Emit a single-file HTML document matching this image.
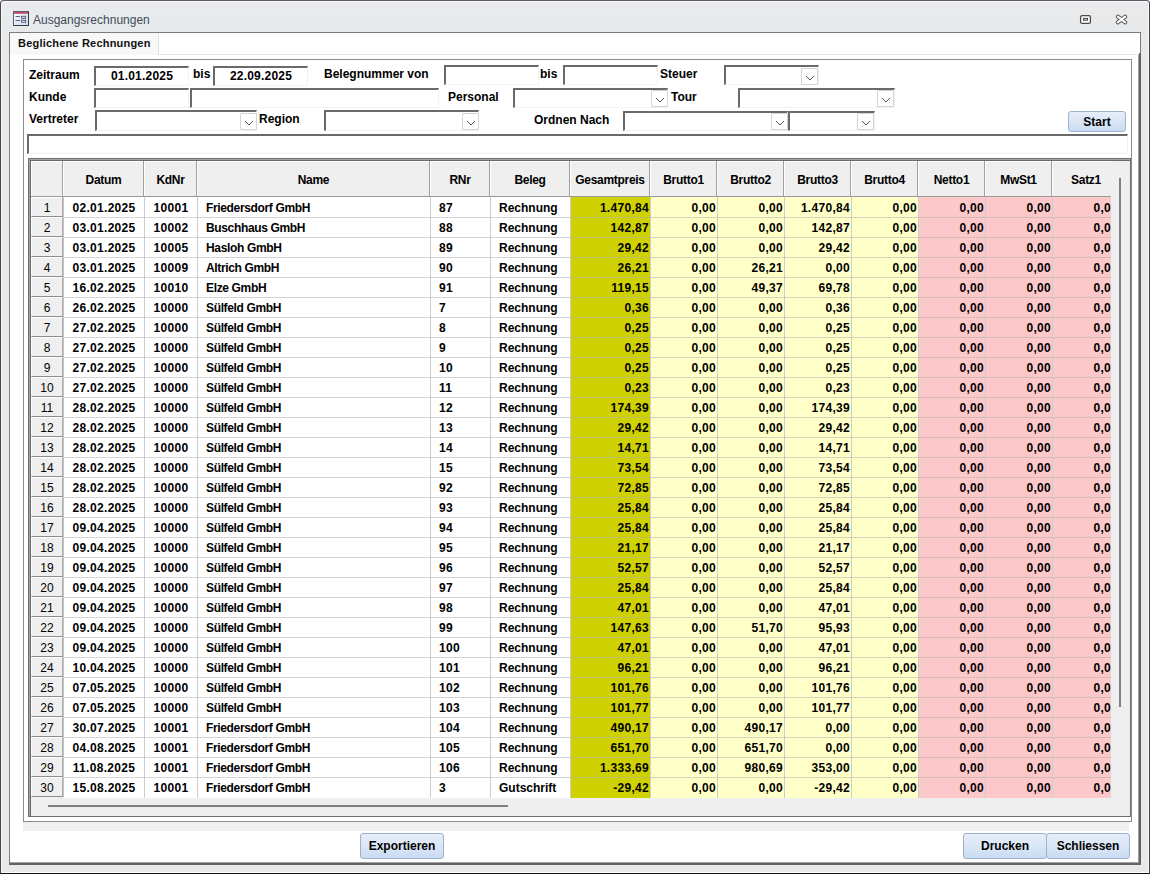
<!DOCTYPE html>
<html><head><meta charset="utf-8"><title>Ausgangsrechnungen</title>
<style>
*{box-sizing:border-box;margin:0;padding:0}
html,body{width:1150px;height:874px;overflow:hidden;background:#e9eaec;font-family:"Liberation Sans",sans-serif;}
.a{position:absolute}
.lbl{position:absolute;font-weight:bold;font-size:12px;color:#000;line-height:14px;white-space:nowrap}
.tb{position:absolute;background:#fff;border-top:2px solid #6a6a6a;border-left:2px solid #6a6a6a;border-right:1px solid #f2f2f2;border-bottom:1px solid #f2f2f2;font-weight:bold;font-size:12px;text-align:center;line-height:16px;color:#000;letter-spacing:0.2px}
.dd{position:absolute;background:#fff;border:1px solid #d4d4d4;border-radius:1px}
.dd svg{position:absolute;left:3px;top:6px}
.btn{position:absolute;border:1px solid #9db2cc;border-radius:3px;background:linear-gradient(#e6eef9,#dce7f6 45%,#c9dcf3);font-weight:bold;font-size:12px;text-align:center;color:#000}
.cell{position:absolute;font-weight:bold;font-size:12px;white-space:nowrap;overflow:hidden;color:#000;letter-spacing:0.3px}
</style></head><body>

<div class="a" style="left:0;top:0;width:1150px;height:874px;border:1px solid;border-color:#5a5c62 #404348 #101214 #404348;border-radius:4px 4px 0 0;box-shadow:inset 0 0 0 1px #fbfbfc;background:linear-gradient(#eaebed,#e8e9eb 30px)"></div>
<svg class="a" style="left:13px;top:11px" width="16" height="15" viewBox="0 0 16 15">
<defs><linearGradient id="ig" x1="0" y1="0" x2="1" y2="1"><stop offset="0" stop-color="#ffffff"/><stop offset="1" stop-color="#c9d4ee"/></linearGradient></defs>
<rect x="0.5" y="0.5" width="15" height="14" fill="url(#ig)" stroke="#56627a"/>
<path d="M15.5 0.5 V14.5 H0.5" fill="none" stroke="#333c4c"/>
<rect x="1" y="1" width="14" height="1.8" fill="#c84868"/>
<rect x="2.5" y="5" width="4.5" height="1" fill="#5a6478"/>
<rect x="2.5" y="9" width="4.5" height="1" fill="#5a6478"/>
<rect x="8.5" y="5.3" width="4" height="2" fill="#eef2fa" stroke="#56627a"/>
<rect x="8.5" y="9.2" width="4" height="2" fill="#eef2fa" stroke="#56627a"/>
</svg>
<div class="a" style="left:33px;top:12px;font-size:12px;color:#3e4a5a;line-height:16px;white-space:nowrap">Ausgangsrechnungen</div>
<svg class="a" style="left:1079px;top:14px" width="13" height="11" viewBox="0 0 13 11">
<rect x="1.6" y="1.6" width="9.8" height="7.8" rx="1.5" fill="#fff" stroke="#4a4a4a" stroke-width="1.3"/>
<rect x="4.6" y="4.4" width="3.8" height="1.8" fill="#fff" stroke="#4a4a4a" stroke-width="1.1"/>
</svg>
<svg class="a" style="left:1115px;top:14px" width="13" height="11" viewBox="0 0 13 11">
<path d="M2.8 2.6 L10.2 8.4 M10.2 2.6 L2.8 8.4" stroke="#505050" stroke-width="3.9" stroke-linecap="round"/>
<path d="M2.8 2.6 L10.2 8.4 M10.2 2.6 L2.8 8.4" stroke="#fff" stroke-width="2.1" stroke-linecap="round"/>
</svg>
<div class="a" style="left:9px;top:32px;width:1132px;height:833px;background:#fff;border-left:1px solid #7c7c7c;border-top:1px solid #7c7c7c;border-right:2px solid #646464;border-bottom:2px solid #646464;box-shadow:inset -1px -1px 0 #a0a0a0"></div>
<div class="a" style="left:10px;top:33px;width:148px;height:22px;background:#f8f8f8"></div>
<div class="a" style="left:1139px;top:33px;width:2px;height:20px;background:#fff;border-right:1px solid #7c7c7c"></div>
<div class="a" style="left:158px;top:33px;width:981px;height:22px;background:#fff;border-left:1px solid #e2e2e2;border-bottom:1px solid #e6e6e6"></div>
<div class="a" style="left:18px;top:37px;font-size:11px;font-weight:bold;color:#111;line-height:13px;white-space:nowrap;letter-spacing:0.2px">Beglichene Rechnungen</div>
<div class="a" style="left:23px;top:59px;width:1109px;height:763px;border:1px solid #8c8c8c;background:#fff"></div>
<div class="a" style="left:23px;top:822px;width:1106px;height:9px;background:#f0f0f0"></div>
<div class="lbl" style="left:29px;top:68px">Zeitraum</div>
<div class="lbl" style="left:193px;top:67px">bis</div>
<div class="lbl" style="left:324px;top:67px">Belegnummer von</div>
<div class="lbl" style="left:540px;top:67px">bis</div>
<div class="lbl" style="left:660px;top:67px">Steuer</div>
<div class="lbl" style="left:29px;top:90px">Kunde</div>
<div class="lbl" style="left:448px;top:90px">Personal</div>
<div class="lbl" style="left:671px;top:90px">Tour</div>
<div class="lbl" style="left:29px;top:112px">Vertreter</div>
<div class="lbl" style="left:259px;top:112px">Region</div>
<div class="lbl" style="left:534px;top:113px">Ordnen Nach</div>
<div class="tb" style="left:94px;top:66px;width:95px;height:20px">01.01.2025</div>
<div class="tb" style="left:213px;top:66px;width:95px;height:20px">22.09.2025</div>
<div class="tb" style="left:444px;top:65px;width:95px;height:20px"></div>
<div class="tb" style="left:563px;top:65px;width:95px;height:20px"></div>
<div class="tb" style="left:724px;top:65px;width:95px;height:20px"></div>
<div class="dd" style="left:801px;top:68px;width:17px;height:17px"><svg width="10" height="6" viewBox="0 0 10 6"><path d="M1 1 L5 5 L9 1" fill="none" stroke="#555" stroke-width="1"/></svg></div>
<div class="tb" style="left:94px;top:88px;width:95px;height:20px"></div>
<div class="tb" style="left:190px;top:88px;width:249px;height:20px"></div>
<div class="tb" style="left:513px;top:88px;width:155px;height:20px"></div>
<div class="dd" style="left:651px;top:90px;width:17px;height:17px"><svg width="10" height="6" viewBox="0 0 10 6"><path d="M1 1 L5 5 L9 1" fill="none" stroke="#555" stroke-width="1"/></svg></div>
<div class="tb" style="left:738px;top:88px;width:157px;height:20px"></div>
<div class="dd" style="left:877px;top:90px;width:17px;height:17px"><svg width="10" height="6" viewBox="0 0 10 6"><path d="M1 1 L5 5 L9 1" fill="none" stroke="#555" stroke-width="1"/></svg></div>
<div class="tb" style="left:95px;top:110px;width:162px;height:21px"></div>
<div class="dd" style="left:240px;top:113px;width:17px;height:17px"><svg width="10" height="6" viewBox="0 0 10 6"><path d="M1 1 L5 5 L9 1" fill="none" stroke="#555" stroke-width="1"/></svg></div>
<div class="tb" style="left:324px;top:110px;width:155px;height:21px"></div>
<div class="dd" style="left:462px;top:113px;width:17px;height:17px"><svg width="10" height="6" viewBox="0 0 10 6"><path d="M1 1 L5 5 L9 1" fill="none" stroke="#555" stroke-width="1"/></svg></div>
<div class="tb" style="left:623px;top:111px;width:165px;height:20px"></div>
<div class="dd" style="left:771px;top:113px;width:17px;height:17px"><svg width="10" height="6" viewBox="0 0 10 6"><path d="M1 1 L5 5 L9 1" fill="none" stroke="#555" stroke-width="1"/></svg></div>
<div class="tb" style="left:788px;top:111px;width:87px;height:20px"></div>
<div class="dd" style="left:857px;top:113px;width:17px;height:17px"><svg width="10" height="6" viewBox="0 0 10 6"><path d="M1 1 L5 5 L9 1" fill="none" stroke="#555" stroke-width="1"/></svg></div>
<div class="btn" style="left:1068px;top:111px;width:58px;height:21px;line-height:21px">Start</div>
<div class="tb" style="left:27px;top:134px;width:1101px;height:20px"></div>
<div class="a" style="left:28px;top:158px;width:1103px;height:659px;background:#efefef;border:1px solid #707070;box-shadow:inset 1px 1px 0 #a4a4a4,inset 2px 2px 0 #6a6a6a"></div>
<div class="a" style="left:31px;top:161px;width:31px;height:35px;background:#efefef;border-top:1px solid #fff;border-left:1px solid #fff"></div>
<div class="a" style="left:63px;top:161px;width:80px;height:35px;background:#efefef;border-top:1px solid #fff;border-left:1px solid #fff;font-weight:bold;font-size:12px;text-align:center;line-height:34px;padding-top:1px;white-space:nowrap;overflow:hidden;letter-spacing:-0.3px">Datum</div>
<div class="a" style="left:144px;top:161px;width:52px;height:35px;background:#efefef;border-top:1px solid #fff;border-left:1px solid #fff;font-weight:bold;font-size:12px;text-align:center;line-height:34px;padding-top:1px;white-space:nowrap;overflow:hidden;letter-spacing:-0.3px">KdNr</div>
<div class="a" style="left:197px;top:161px;width:232px;height:35px;background:#efefef;border-top:1px solid #fff;border-left:1px solid #fff;font-weight:bold;font-size:12px;text-align:center;line-height:34px;padding-top:1px;white-space:nowrap;overflow:hidden;letter-spacing:-0.3px">Name</div>
<div class="a" style="left:430px;top:161px;width:59px;height:35px;background:#efefef;border-top:1px solid #fff;border-left:1px solid #fff;font-weight:bold;font-size:12px;text-align:center;line-height:34px;padding-top:1px;white-space:nowrap;overflow:hidden;letter-spacing:-0.3px">RNr</div>
<div class="a" style="left:490px;top:161px;width:79px;height:35px;background:#efefef;border-top:1px solid #fff;border-left:1px solid #fff;font-weight:bold;font-size:12px;text-align:center;line-height:34px;padding-top:1px;white-space:nowrap;overflow:hidden;letter-spacing:-0.3px">Beleg</div>
<div class="a" style="left:570px;top:161px;width:79px;height:35px;background:#efefef;border-top:1px solid #fff;border-left:1px solid #fff;font-weight:bold;font-size:12px;text-align:center;line-height:34px;padding-top:1px;white-space:nowrap;overflow:hidden;letter-spacing:-0.3px">Gesamtpreis</div>
<div class="a" style="left:650px;top:161px;width:66px;height:35px;background:#efefef;border-top:1px solid #fff;border-left:1px solid #fff;font-weight:bold;font-size:12px;text-align:center;line-height:34px;padding-top:1px;white-space:nowrap;overflow:hidden;letter-spacing:-0.3px">Brutto1</div>
<div class="a" style="left:717px;top:161px;width:66px;height:35px;background:#efefef;border-top:1px solid #fff;border-left:1px solid #fff;font-weight:bold;font-size:12px;text-align:center;line-height:34px;padding-top:1px;white-space:nowrap;overflow:hidden;letter-spacing:-0.3px">Brutto2</div>
<div class="a" style="left:784px;top:161px;width:66px;height:35px;background:#efefef;border-top:1px solid #fff;border-left:1px solid #fff;font-weight:bold;font-size:12px;text-align:center;line-height:34px;padding-top:1px;white-space:nowrap;overflow:hidden;letter-spacing:-0.3px">Brutto3</div>
<div class="a" style="left:851px;top:161px;width:66px;height:35px;background:#efefef;border-top:1px solid #fff;border-left:1px solid #fff;font-weight:bold;font-size:12px;text-align:center;line-height:34px;padding-top:1px;white-space:nowrap;overflow:hidden;letter-spacing:-0.3px">Brutto4</div>
<div class="a" style="left:918px;top:161px;width:66px;height:35px;background:#efefef;border-top:1px solid #fff;border-left:1px solid #fff;font-weight:bold;font-size:12px;text-align:center;line-height:34px;padding-top:1px;white-space:nowrap;overflow:hidden;letter-spacing:-0.3px">Netto1</div>
<div class="a" style="left:985px;top:161px;width:66px;height:35px;background:#efefef;border-top:1px solid #fff;border-left:1px solid #fff;font-weight:bold;font-size:12px;text-align:center;line-height:34px;padding-top:1px;white-space:nowrap;overflow:hidden;letter-spacing:-0.3px">MwSt1</div>
<div class="a" style="left:1052px;top:161px;width:67px;height:35px;background:#efefef;border-top:1px solid #fff;border-left:1px solid #fff;font-weight:bold;font-size:12px;text-align:center;line-height:34px;padding-top:1px;white-space:nowrap;overflow:hidden;letter-spacing:-0.3px">Satz1</div>
<div class="a" style="left:62px;top:161px;width:1px;height:36px;background:#a0a0a0"></div>
<div class="a" style="left:143px;top:161px;width:1px;height:36px;background:#a0a0a0"></div>
<div class="a" style="left:196px;top:161px;width:1px;height:36px;background:#a0a0a0"></div>
<div class="a" style="left:429px;top:161px;width:1px;height:36px;background:#a0a0a0"></div>
<div class="a" style="left:489px;top:161px;width:1px;height:36px;background:#a0a0a0"></div>
<div class="a" style="left:569px;top:161px;width:1px;height:36px;background:#a0a0a0"></div>
<div class="a" style="left:649px;top:161px;width:1px;height:36px;background:#a0a0a0"></div>
<div class="a" style="left:716px;top:161px;width:1px;height:36px;background:#a0a0a0"></div>
<div class="a" style="left:783px;top:161px;width:1px;height:36px;background:#a0a0a0"></div>
<div class="a" style="left:850px;top:161px;width:1px;height:36px;background:#a0a0a0"></div>
<div class="a" style="left:917px;top:161px;width:1px;height:36px;background:#a0a0a0"></div>
<div class="a" style="left:984px;top:161px;width:1px;height:36px;background:#a0a0a0"></div>
<div class="a" style="left:1051px;top:161px;width:1px;height:36px;background:#a0a0a0"></div>
<div class="a" style="left:31px;top:196px;width:1080px;height:1px;background:#9a9a9a"></div>
<div class="a" style="left:31px;top:197px;width:32px;height:20px;background:#efefef;border-bottom:1px solid #8c8c8c;border-right:1px solid #a8a8a8;border-top:1px solid #fff;border-left:1px solid #fff;font-size:12px;text-align:center;line-height:18px;padding-top:1px;color:#000">1</div>
<div class="cell" style="left:64px;top:197px;width:80px;height:20px;background:#fff;line-height:19px;padding-top:2px;text-align:center">02.01.2025</div>
<div class="cell" style="left:145px;top:197px;width:52px;height:20px;background:#fff;line-height:19px;padding-top:2px;text-align:center">10001</div>
<div class="cell" style="left:198px;top:197px;width:232px;height:20px;background:#fff;line-height:19px;padding-top:2px;text-align:left;padding-left:8px;letter-spacing:-0.35px">Friedersdorf GmbH</div>
<div class="cell" style="left:431px;top:197px;width:59px;height:20px;background:#fff;line-height:19px;padding-top:2px;text-align:left;padding-left:8px;letter-spacing:0.3px">87</div>
<div class="cell" style="left:491px;top:197px;width:79px;height:20px;background:#fff;line-height:19px;padding-top:2px;text-align:left;padding-left:8px;letter-spacing:0px">Rechnung</div>
<div class="cell" style="left:571px;top:197px;width:79px;height:20px;background:#cfd200;line-height:19px;padding-top:2px;text-align:right;padding-right:1px">1.470,84</div>
<div class="cell" style="left:651px;top:197px;width:66px;height:20px;background:#ffffc8;line-height:19px;padding-top:2px;text-align:right;padding-right:1px">0,00</div>
<div class="cell" style="left:718px;top:197px;width:66px;height:20px;background:#ffffc8;line-height:19px;padding-top:2px;text-align:right;padding-right:1px">0,00</div>
<div class="cell" style="left:785px;top:197px;width:66px;height:20px;background:#ffffc8;line-height:19px;padding-top:2px;text-align:right;padding-right:1px">1.470,84</div>
<div class="cell" style="left:852px;top:197px;width:66px;height:20px;background:#ffffc8;line-height:19px;padding-top:2px;text-align:right;padding-right:1px">0,00</div>
<div class="cell" style="left:919px;top:197px;width:66px;height:20px;background:#fdc8c9;line-height:19px;padding-top:2px;text-align:right;padding-right:1px">0,00</div>
<div class="cell" style="left:986px;top:197px;width:66px;height:20px;background:#fdc8c9;line-height:19px;padding-top:2px;text-align:right;padding-right:1px">0,00</div>
<div class="cell" style="left:1053px;top:197px;width:66px;height:20px;background:#fdc8c9;line-height:19px;padding-top:2px;text-align:right;padding-right:1px">0,00</div>
<div class="a" style="left:31px;top:217px;width:32px;height:20px;background:#efefef;border-bottom:1px solid #8c8c8c;border-right:1px solid #a8a8a8;border-top:1px solid #fff;border-left:1px solid #fff;font-size:12px;text-align:center;line-height:18px;padding-top:1px;color:#000">2</div>
<div class="cell" style="left:64px;top:217px;width:80px;height:20px;background:#fff;line-height:19px;padding-top:2px;text-align:center">03.01.2025</div>
<div class="cell" style="left:145px;top:217px;width:52px;height:20px;background:#fff;line-height:19px;padding-top:2px;text-align:center">10002</div>
<div class="cell" style="left:198px;top:217px;width:232px;height:20px;background:#fff;line-height:19px;padding-top:2px;text-align:left;padding-left:8px;letter-spacing:-0.35px">Buschhaus GmbH</div>
<div class="cell" style="left:431px;top:217px;width:59px;height:20px;background:#fff;line-height:19px;padding-top:2px;text-align:left;padding-left:8px;letter-spacing:0.3px">88</div>
<div class="cell" style="left:491px;top:217px;width:79px;height:20px;background:#fff;line-height:19px;padding-top:2px;text-align:left;padding-left:8px;letter-spacing:0px">Rechnung</div>
<div class="cell" style="left:571px;top:217px;width:79px;height:20px;background:#cfd200;line-height:19px;padding-top:2px;text-align:right;padding-right:1px">142,87</div>
<div class="cell" style="left:651px;top:217px;width:66px;height:20px;background:#ffffc8;line-height:19px;padding-top:2px;text-align:right;padding-right:1px">0,00</div>
<div class="cell" style="left:718px;top:217px;width:66px;height:20px;background:#ffffc8;line-height:19px;padding-top:2px;text-align:right;padding-right:1px">0,00</div>
<div class="cell" style="left:785px;top:217px;width:66px;height:20px;background:#ffffc8;line-height:19px;padding-top:2px;text-align:right;padding-right:1px">142,87</div>
<div class="cell" style="left:852px;top:217px;width:66px;height:20px;background:#ffffc8;line-height:19px;padding-top:2px;text-align:right;padding-right:1px">0,00</div>
<div class="cell" style="left:919px;top:217px;width:66px;height:20px;background:#fdc8c9;line-height:19px;padding-top:2px;text-align:right;padding-right:1px">0,00</div>
<div class="cell" style="left:986px;top:217px;width:66px;height:20px;background:#fdc8c9;line-height:19px;padding-top:2px;text-align:right;padding-right:1px">0,00</div>
<div class="cell" style="left:1053px;top:217px;width:66px;height:20px;background:#fdc8c9;line-height:19px;padding-top:2px;text-align:right;padding-right:1px">0,00</div>
<div class="a" style="left:31px;top:237px;width:32px;height:20px;background:#efefef;border-bottom:1px solid #8c8c8c;border-right:1px solid #a8a8a8;border-top:1px solid #fff;border-left:1px solid #fff;font-size:12px;text-align:center;line-height:18px;padding-top:1px;color:#000">3</div>
<div class="cell" style="left:64px;top:237px;width:80px;height:20px;background:#fff;line-height:19px;padding-top:2px;text-align:center">03.01.2025</div>
<div class="cell" style="left:145px;top:237px;width:52px;height:20px;background:#fff;line-height:19px;padding-top:2px;text-align:center">10005</div>
<div class="cell" style="left:198px;top:237px;width:232px;height:20px;background:#fff;line-height:19px;padding-top:2px;text-align:left;padding-left:8px;letter-spacing:-0.35px">Hasloh GmbH</div>
<div class="cell" style="left:431px;top:237px;width:59px;height:20px;background:#fff;line-height:19px;padding-top:2px;text-align:left;padding-left:8px;letter-spacing:0.3px">89</div>
<div class="cell" style="left:491px;top:237px;width:79px;height:20px;background:#fff;line-height:19px;padding-top:2px;text-align:left;padding-left:8px;letter-spacing:0px">Rechnung</div>
<div class="cell" style="left:571px;top:237px;width:79px;height:20px;background:#cfd200;line-height:19px;padding-top:2px;text-align:right;padding-right:1px">29,42</div>
<div class="cell" style="left:651px;top:237px;width:66px;height:20px;background:#ffffc8;line-height:19px;padding-top:2px;text-align:right;padding-right:1px">0,00</div>
<div class="cell" style="left:718px;top:237px;width:66px;height:20px;background:#ffffc8;line-height:19px;padding-top:2px;text-align:right;padding-right:1px">0,00</div>
<div class="cell" style="left:785px;top:237px;width:66px;height:20px;background:#ffffc8;line-height:19px;padding-top:2px;text-align:right;padding-right:1px">29,42</div>
<div class="cell" style="left:852px;top:237px;width:66px;height:20px;background:#ffffc8;line-height:19px;padding-top:2px;text-align:right;padding-right:1px">0,00</div>
<div class="cell" style="left:919px;top:237px;width:66px;height:20px;background:#fdc8c9;line-height:19px;padding-top:2px;text-align:right;padding-right:1px">0,00</div>
<div class="cell" style="left:986px;top:237px;width:66px;height:20px;background:#fdc8c9;line-height:19px;padding-top:2px;text-align:right;padding-right:1px">0,00</div>
<div class="cell" style="left:1053px;top:237px;width:66px;height:20px;background:#fdc8c9;line-height:19px;padding-top:2px;text-align:right;padding-right:1px">0,00</div>
<div class="a" style="left:31px;top:257px;width:32px;height:20px;background:#efefef;border-bottom:1px solid #8c8c8c;border-right:1px solid #a8a8a8;border-top:1px solid #fff;border-left:1px solid #fff;font-size:12px;text-align:center;line-height:18px;padding-top:1px;color:#000">4</div>
<div class="cell" style="left:64px;top:257px;width:80px;height:20px;background:#fff;line-height:19px;padding-top:2px;text-align:center">03.01.2025</div>
<div class="cell" style="left:145px;top:257px;width:52px;height:20px;background:#fff;line-height:19px;padding-top:2px;text-align:center">10009</div>
<div class="cell" style="left:198px;top:257px;width:232px;height:20px;background:#fff;line-height:19px;padding-top:2px;text-align:left;padding-left:8px;letter-spacing:-0.35px">Altrich GmbH</div>
<div class="cell" style="left:431px;top:257px;width:59px;height:20px;background:#fff;line-height:19px;padding-top:2px;text-align:left;padding-left:8px;letter-spacing:0.3px">90</div>
<div class="cell" style="left:491px;top:257px;width:79px;height:20px;background:#fff;line-height:19px;padding-top:2px;text-align:left;padding-left:8px;letter-spacing:0px">Rechnung</div>
<div class="cell" style="left:571px;top:257px;width:79px;height:20px;background:#cfd200;line-height:19px;padding-top:2px;text-align:right;padding-right:1px">26,21</div>
<div class="cell" style="left:651px;top:257px;width:66px;height:20px;background:#ffffc8;line-height:19px;padding-top:2px;text-align:right;padding-right:1px">0,00</div>
<div class="cell" style="left:718px;top:257px;width:66px;height:20px;background:#ffffc8;line-height:19px;padding-top:2px;text-align:right;padding-right:1px">26,21</div>
<div class="cell" style="left:785px;top:257px;width:66px;height:20px;background:#ffffc8;line-height:19px;padding-top:2px;text-align:right;padding-right:1px">0,00</div>
<div class="cell" style="left:852px;top:257px;width:66px;height:20px;background:#ffffc8;line-height:19px;padding-top:2px;text-align:right;padding-right:1px">0,00</div>
<div class="cell" style="left:919px;top:257px;width:66px;height:20px;background:#fdc8c9;line-height:19px;padding-top:2px;text-align:right;padding-right:1px">0,00</div>
<div class="cell" style="left:986px;top:257px;width:66px;height:20px;background:#fdc8c9;line-height:19px;padding-top:2px;text-align:right;padding-right:1px">0,00</div>
<div class="cell" style="left:1053px;top:257px;width:66px;height:20px;background:#fdc8c9;line-height:19px;padding-top:2px;text-align:right;padding-right:1px">0,00</div>
<div class="a" style="left:31px;top:277px;width:32px;height:20px;background:#efefef;border-bottom:1px solid #8c8c8c;border-right:1px solid #a8a8a8;border-top:1px solid #fff;border-left:1px solid #fff;font-size:12px;text-align:center;line-height:18px;padding-top:1px;color:#000">5</div>
<div class="cell" style="left:64px;top:277px;width:80px;height:20px;background:#fff;line-height:19px;padding-top:2px;text-align:center">16.02.2025</div>
<div class="cell" style="left:145px;top:277px;width:52px;height:20px;background:#fff;line-height:19px;padding-top:2px;text-align:center">10010</div>
<div class="cell" style="left:198px;top:277px;width:232px;height:20px;background:#fff;line-height:19px;padding-top:2px;text-align:left;padding-left:8px;letter-spacing:-0.35px">Elze GmbH</div>
<div class="cell" style="left:431px;top:277px;width:59px;height:20px;background:#fff;line-height:19px;padding-top:2px;text-align:left;padding-left:8px;letter-spacing:0.3px">91</div>
<div class="cell" style="left:491px;top:277px;width:79px;height:20px;background:#fff;line-height:19px;padding-top:2px;text-align:left;padding-left:8px;letter-spacing:0px">Rechnung</div>
<div class="cell" style="left:571px;top:277px;width:79px;height:20px;background:#cfd200;line-height:19px;padding-top:2px;text-align:right;padding-right:1px">119,15</div>
<div class="cell" style="left:651px;top:277px;width:66px;height:20px;background:#ffffc8;line-height:19px;padding-top:2px;text-align:right;padding-right:1px">0,00</div>
<div class="cell" style="left:718px;top:277px;width:66px;height:20px;background:#ffffc8;line-height:19px;padding-top:2px;text-align:right;padding-right:1px">49,37</div>
<div class="cell" style="left:785px;top:277px;width:66px;height:20px;background:#ffffc8;line-height:19px;padding-top:2px;text-align:right;padding-right:1px">69,78</div>
<div class="cell" style="left:852px;top:277px;width:66px;height:20px;background:#ffffc8;line-height:19px;padding-top:2px;text-align:right;padding-right:1px">0,00</div>
<div class="cell" style="left:919px;top:277px;width:66px;height:20px;background:#fdc8c9;line-height:19px;padding-top:2px;text-align:right;padding-right:1px">0,00</div>
<div class="cell" style="left:986px;top:277px;width:66px;height:20px;background:#fdc8c9;line-height:19px;padding-top:2px;text-align:right;padding-right:1px">0,00</div>
<div class="cell" style="left:1053px;top:277px;width:66px;height:20px;background:#fdc8c9;line-height:19px;padding-top:2px;text-align:right;padding-right:1px">0,00</div>
<div class="a" style="left:31px;top:297px;width:32px;height:20px;background:#efefef;border-bottom:1px solid #8c8c8c;border-right:1px solid #a8a8a8;border-top:1px solid #fff;border-left:1px solid #fff;font-size:12px;text-align:center;line-height:18px;padding-top:1px;color:#000">6</div>
<div class="cell" style="left:64px;top:297px;width:80px;height:20px;background:#fff;line-height:19px;padding-top:2px;text-align:center">26.02.2025</div>
<div class="cell" style="left:145px;top:297px;width:52px;height:20px;background:#fff;line-height:19px;padding-top:2px;text-align:center">10000</div>
<div class="cell" style="left:198px;top:297px;width:232px;height:20px;background:#fff;line-height:19px;padding-top:2px;text-align:left;padding-left:8px;letter-spacing:-0.35px">Sülfeld GmbH</div>
<div class="cell" style="left:431px;top:297px;width:59px;height:20px;background:#fff;line-height:19px;padding-top:2px;text-align:left;padding-left:8px;letter-spacing:0.3px">7</div>
<div class="cell" style="left:491px;top:297px;width:79px;height:20px;background:#fff;line-height:19px;padding-top:2px;text-align:left;padding-left:8px;letter-spacing:0px">Rechnung</div>
<div class="cell" style="left:571px;top:297px;width:79px;height:20px;background:#cfd200;line-height:19px;padding-top:2px;text-align:right;padding-right:1px">0,36</div>
<div class="cell" style="left:651px;top:297px;width:66px;height:20px;background:#ffffc8;line-height:19px;padding-top:2px;text-align:right;padding-right:1px">0,00</div>
<div class="cell" style="left:718px;top:297px;width:66px;height:20px;background:#ffffc8;line-height:19px;padding-top:2px;text-align:right;padding-right:1px">0,00</div>
<div class="cell" style="left:785px;top:297px;width:66px;height:20px;background:#ffffc8;line-height:19px;padding-top:2px;text-align:right;padding-right:1px">0,36</div>
<div class="cell" style="left:852px;top:297px;width:66px;height:20px;background:#ffffc8;line-height:19px;padding-top:2px;text-align:right;padding-right:1px">0,00</div>
<div class="cell" style="left:919px;top:297px;width:66px;height:20px;background:#fdc8c9;line-height:19px;padding-top:2px;text-align:right;padding-right:1px">0,00</div>
<div class="cell" style="left:986px;top:297px;width:66px;height:20px;background:#fdc8c9;line-height:19px;padding-top:2px;text-align:right;padding-right:1px">0,00</div>
<div class="cell" style="left:1053px;top:297px;width:66px;height:20px;background:#fdc8c9;line-height:19px;padding-top:2px;text-align:right;padding-right:1px">0,00</div>
<div class="a" style="left:31px;top:317px;width:32px;height:20px;background:#efefef;border-bottom:1px solid #8c8c8c;border-right:1px solid #a8a8a8;border-top:1px solid #fff;border-left:1px solid #fff;font-size:12px;text-align:center;line-height:18px;padding-top:1px;color:#000">7</div>
<div class="cell" style="left:64px;top:317px;width:80px;height:20px;background:#fff;line-height:19px;padding-top:2px;text-align:center">27.02.2025</div>
<div class="cell" style="left:145px;top:317px;width:52px;height:20px;background:#fff;line-height:19px;padding-top:2px;text-align:center">10000</div>
<div class="cell" style="left:198px;top:317px;width:232px;height:20px;background:#fff;line-height:19px;padding-top:2px;text-align:left;padding-left:8px;letter-spacing:-0.35px">Sülfeld GmbH</div>
<div class="cell" style="left:431px;top:317px;width:59px;height:20px;background:#fff;line-height:19px;padding-top:2px;text-align:left;padding-left:8px;letter-spacing:0.3px">8</div>
<div class="cell" style="left:491px;top:317px;width:79px;height:20px;background:#fff;line-height:19px;padding-top:2px;text-align:left;padding-left:8px;letter-spacing:0px">Rechnung</div>
<div class="cell" style="left:571px;top:317px;width:79px;height:20px;background:#cfd200;line-height:19px;padding-top:2px;text-align:right;padding-right:1px">0,25</div>
<div class="cell" style="left:651px;top:317px;width:66px;height:20px;background:#ffffc8;line-height:19px;padding-top:2px;text-align:right;padding-right:1px">0,00</div>
<div class="cell" style="left:718px;top:317px;width:66px;height:20px;background:#ffffc8;line-height:19px;padding-top:2px;text-align:right;padding-right:1px">0,00</div>
<div class="cell" style="left:785px;top:317px;width:66px;height:20px;background:#ffffc8;line-height:19px;padding-top:2px;text-align:right;padding-right:1px">0,25</div>
<div class="cell" style="left:852px;top:317px;width:66px;height:20px;background:#ffffc8;line-height:19px;padding-top:2px;text-align:right;padding-right:1px">0,00</div>
<div class="cell" style="left:919px;top:317px;width:66px;height:20px;background:#fdc8c9;line-height:19px;padding-top:2px;text-align:right;padding-right:1px">0,00</div>
<div class="cell" style="left:986px;top:317px;width:66px;height:20px;background:#fdc8c9;line-height:19px;padding-top:2px;text-align:right;padding-right:1px">0,00</div>
<div class="cell" style="left:1053px;top:317px;width:66px;height:20px;background:#fdc8c9;line-height:19px;padding-top:2px;text-align:right;padding-right:1px">0,00</div>
<div class="a" style="left:31px;top:337px;width:32px;height:20px;background:#efefef;border-bottom:1px solid #8c8c8c;border-right:1px solid #a8a8a8;border-top:1px solid #fff;border-left:1px solid #fff;font-size:12px;text-align:center;line-height:18px;padding-top:1px;color:#000">8</div>
<div class="cell" style="left:64px;top:337px;width:80px;height:20px;background:#fff;line-height:19px;padding-top:2px;text-align:center">27.02.2025</div>
<div class="cell" style="left:145px;top:337px;width:52px;height:20px;background:#fff;line-height:19px;padding-top:2px;text-align:center">10000</div>
<div class="cell" style="left:198px;top:337px;width:232px;height:20px;background:#fff;line-height:19px;padding-top:2px;text-align:left;padding-left:8px;letter-spacing:-0.35px">Sülfeld GmbH</div>
<div class="cell" style="left:431px;top:337px;width:59px;height:20px;background:#fff;line-height:19px;padding-top:2px;text-align:left;padding-left:8px;letter-spacing:0.3px">9</div>
<div class="cell" style="left:491px;top:337px;width:79px;height:20px;background:#fff;line-height:19px;padding-top:2px;text-align:left;padding-left:8px;letter-spacing:0px">Rechnung</div>
<div class="cell" style="left:571px;top:337px;width:79px;height:20px;background:#cfd200;line-height:19px;padding-top:2px;text-align:right;padding-right:1px">0,25</div>
<div class="cell" style="left:651px;top:337px;width:66px;height:20px;background:#ffffc8;line-height:19px;padding-top:2px;text-align:right;padding-right:1px">0,00</div>
<div class="cell" style="left:718px;top:337px;width:66px;height:20px;background:#ffffc8;line-height:19px;padding-top:2px;text-align:right;padding-right:1px">0,00</div>
<div class="cell" style="left:785px;top:337px;width:66px;height:20px;background:#ffffc8;line-height:19px;padding-top:2px;text-align:right;padding-right:1px">0,25</div>
<div class="cell" style="left:852px;top:337px;width:66px;height:20px;background:#ffffc8;line-height:19px;padding-top:2px;text-align:right;padding-right:1px">0,00</div>
<div class="cell" style="left:919px;top:337px;width:66px;height:20px;background:#fdc8c9;line-height:19px;padding-top:2px;text-align:right;padding-right:1px">0,00</div>
<div class="cell" style="left:986px;top:337px;width:66px;height:20px;background:#fdc8c9;line-height:19px;padding-top:2px;text-align:right;padding-right:1px">0,00</div>
<div class="cell" style="left:1053px;top:337px;width:66px;height:20px;background:#fdc8c9;line-height:19px;padding-top:2px;text-align:right;padding-right:1px">0,00</div>
<div class="a" style="left:31px;top:357px;width:32px;height:20px;background:#efefef;border-bottom:1px solid #8c8c8c;border-right:1px solid #a8a8a8;border-top:1px solid #fff;border-left:1px solid #fff;font-size:12px;text-align:center;line-height:18px;padding-top:1px;color:#000">9</div>
<div class="cell" style="left:64px;top:357px;width:80px;height:20px;background:#fff;line-height:19px;padding-top:2px;text-align:center">27.02.2025</div>
<div class="cell" style="left:145px;top:357px;width:52px;height:20px;background:#fff;line-height:19px;padding-top:2px;text-align:center">10000</div>
<div class="cell" style="left:198px;top:357px;width:232px;height:20px;background:#fff;line-height:19px;padding-top:2px;text-align:left;padding-left:8px;letter-spacing:-0.35px">Sülfeld GmbH</div>
<div class="cell" style="left:431px;top:357px;width:59px;height:20px;background:#fff;line-height:19px;padding-top:2px;text-align:left;padding-left:8px;letter-spacing:0.3px">10</div>
<div class="cell" style="left:491px;top:357px;width:79px;height:20px;background:#fff;line-height:19px;padding-top:2px;text-align:left;padding-left:8px;letter-spacing:0px">Rechnung</div>
<div class="cell" style="left:571px;top:357px;width:79px;height:20px;background:#cfd200;line-height:19px;padding-top:2px;text-align:right;padding-right:1px">0,25</div>
<div class="cell" style="left:651px;top:357px;width:66px;height:20px;background:#ffffc8;line-height:19px;padding-top:2px;text-align:right;padding-right:1px">0,00</div>
<div class="cell" style="left:718px;top:357px;width:66px;height:20px;background:#ffffc8;line-height:19px;padding-top:2px;text-align:right;padding-right:1px">0,00</div>
<div class="cell" style="left:785px;top:357px;width:66px;height:20px;background:#ffffc8;line-height:19px;padding-top:2px;text-align:right;padding-right:1px">0,25</div>
<div class="cell" style="left:852px;top:357px;width:66px;height:20px;background:#ffffc8;line-height:19px;padding-top:2px;text-align:right;padding-right:1px">0,00</div>
<div class="cell" style="left:919px;top:357px;width:66px;height:20px;background:#fdc8c9;line-height:19px;padding-top:2px;text-align:right;padding-right:1px">0,00</div>
<div class="cell" style="left:986px;top:357px;width:66px;height:20px;background:#fdc8c9;line-height:19px;padding-top:2px;text-align:right;padding-right:1px">0,00</div>
<div class="cell" style="left:1053px;top:357px;width:66px;height:20px;background:#fdc8c9;line-height:19px;padding-top:2px;text-align:right;padding-right:1px">0,00</div>
<div class="a" style="left:31px;top:377px;width:32px;height:20px;background:#efefef;border-bottom:1px solid #8c8c8c;border-right:1px solid #a8a8a8;border-top:1px solid #fff;border-left:1px solid #fff;font-size:12px;text-align:center;line-height:18px;padding-top:1px;color:#000">10</div>
<div class="cell" style="left:64px;top:377px;width:80px;height:20px;background:#fff;line-height:19px;padding-top:2px;text-align:center">27.02.2025</div>
<div class="cell" style="left:145px;top:377px;width:52px;height:20px;background:#fff;line-height:19px;padding-top:2px;text-align:center">10000</div>
<div class="cell" style="left:198px;top:377px;width:232px;height:20px;background:#fff;line-height:19px;padding-top:2px;text-align:left;padding-left:8px;letter-spacing:-0.35px">Sülfeld GmbH</div>
<div class="cell" style="left:431px;top:377px;width:59px;height:20px;background:#fff;line-height:19px;padding-top:2px;text-align:left;padding-left:8px;letter-spacing:0.3px">11</div>
<div class="cell" style="left:491px;top:377px;width:79px;height:20px;background:#fff;line-height:19px;padding-top:2px;text-align:left;padding-left:8px;letter-spacing:0px">Rechnung</div>
<div class="cell" style="left:571px;top:377px;width:79px;height:20px;background:#cfd200;line-height:19px;padding-top:2px;text-align:right;padding-right:1px">0,23</div>
<div class="cell" style="left:651px;top:377px;width:66px;height:20px;background:#ffffc8;line-height:19px;padding-top:2px;text-align:right;padding-right:1px">0,00</div>
<div class="cell" style="left:718px;top:377px;width:66px;height:20px;background:#ffffc8;line-height:19px;padding-top:2px;text-align:right;padding-right:1px">0,00</div>
<div class="cell" style="left:785px;top:377px;width:66px;height:20px;background:#ffffc8;line-height:19px;padding-top:2px;text-align:right;padding-right:1px">0,23</div>
<div class="cell" style="left:852px;top:377px;width:66px;height:20px;background:#ffffc8;line-height:19px;padding-top:2px;text-align:right;padding-right:1px">0,00</div>
<div class="cell" style="left:919px;top:377px;width:66px;height:20px;background:#fdc8c9;line-height:19px;padding-top:2px;text-align:right;padding-right:1px">0,00</div>
<div class="cell" style="left:986px;top:377px;width:66px;height:20px;background:#fdc8c9;line-height:19px;padding-top:2px;text-align:right;padding-right:1px">0,00</div>
<div class="cell" style="left:1053px;top:377px;width:66px;height:20px;background:#fdc8c9;line-height:19px;padding-top:2px;text-align:right;padding-right:1px">0,00</div>
<div class="a" style="left:31px;top:397px;width:32px;height:20px;background:#efefef;border-bottom:1px solid #8c8c8c;border-right:1px solid #a8a8a8;border-top:1px solid #fff;border-left:1px solid #fff;font-size:12px;text-align:center;line-height:18px;padding-top:1px;color:#000">11</div>
<div class="cell" style="left:64px;top:397px;width:80px;height:20px;background:#fff;line-height:19px;padding-top:2px;text-align:center">28.02.2025</div>
<div class="cell" style="left:145px;top:397px;width:52px;height:20px;background:#fff;line-height:19px;padding-top:2px;text-align:center">10000</div>
<div class="cell" style="left:198px;top:397px;width:232px;height:20px;background:#fff;line-height:19px;padding-top:2px;text-align:left;padding-left:8px;letter-spacing:-0.35px">Sülfeld GmbH</div>
<div class="cell" style="left:431px;top:397px;width:59px;height:20px;background:#fff;line-height:19px;padding-top:2px;text-align:left;padding-left:8px;letter-spacing:0.3px">12</div>
<div class="cell" style="left:491px;top:397px;width:79px;height:20px;background:#fff;line-height:19px;padding-top:2px;text-align:left;padding-left:8px;letter-spacing:0px">Rechnung</div>
<div class="cell" style="left:571px;top:397px;width:79px;height:20px;background:#cfd200;line-height:19px;padding-top:2px;text-align:right;padding-right:1px">174,39</div>
<div class="cell" style="left:651px;top:397px;width:66px;height:20px;background:#ffffc8;line-height:19px;padding-top:2px;text-align:right;padding-right:1px">0,00</div>
<div class="cell" style="left:718px;top:397px;width:66px;height:20px;background:#ffffc8;line-height:19px;padding-top:2px;text-align:right;padding-right:1px">0,00</div>
<div class="cell" style="left:785px;top:397px;width:66px;height:20px;background:#ffffc8;line-height:19px;padding-top:2px;text-align:right;padding-right:1px">174,39</div>
<div class="cell" style="left:852px;top:397px;width:66px;height:20px;background:#ffffc8;line-height:19px;padding-top:2px;text-align:right;padding-right:1px">0,00</div>
<div class="cell" style="left:919px;top:397px;width:66px;height:20px;background:#fdc8c9;line-height:19px;padding-top:2px;text-align:right;padding-right:1px">0,00</div>
<div class="cell" style="left:986px;top:397px;width:66px;height:20px;background:#fdc8c9;line-height:19px;padding-top:2px;text-align:right;padding-right:1px">0,00</div>
<div class="cell" style="left:1053px;top:397px;width:66px;height:20px;background:#fdc8c9;line-height:19px;padding-top:2px;text-align:right;padding-right:1px">0,00</div>
<div class="a" style="left:31px;top:417px;width:32px;height:20px;background:#efefef;border-bottom:1px solid #8c8c8c;border-right:1px solid #a8a8a8;border-top:1px solid #fff;border-left:1px solid #fff;font-size:12px;text-align:center;line-height:18px;padding-top:1px;color:#000">12</div>
<div class="cell" style="left:64px;top:417px;width:80px;height:20px;background:#fff;line-height:19px;padding-top:2px;text-align:center">28.02.2025</div>
<div class="cell" style="left:145px;top:417px;width:52px;height:20px;background:#fff;line-height:19px;padding-top:2px;text-align:center">10000</div>
<div class="cell" style="left:198px;top:417px;width:232px;height:20px;background:#fff;line-height:19px;padding-top:2px;text-align:left;padding-left:8px;letter-spacing:-0.35px">Sülfeld GmbH</div>
<div class="cell" style="left:431px;top:417px;width:59px;height:20px;background:#fff;line-height:19px;padding-top:2px;text-align:left;padding-left:8px;letter-spacing:0.3px">13</div>
<div class="cell" style="left:491px;top:417px;width:79px;height:20px;background:#fff;line-height:19px;padding-top:2px;text-align:left;padding-left:8px;letter-spacing:0px">Rechnung</div>
<div class="cell" style="left:571px;top:417px;width:79px;height:20px;background:#cfd200;line-height:19px;padding-top:2px;text-align:right;padding-right:1px">29,42</div>
<div class="cell" style="left:651px;top:417px;width:66px;height:20px;background:#ffffc8;line-height:19px;padding-top:2px;text-align:right;padding-right:1px">0,00</div>
<div class="cell" style="left:718px;top:417px;width:66px;height:20px;background:#ffffc8;line-height:19px;padding-top:2px;text-align:right;padding-right:1px">0,00</div>
<div class="cell" style="left:785px;top:417px;width:66px;height:20px;background:#ffffc8;line-height:19px;padding-top:2px;text-align:right;padding-right:1px">29,42</div>
<div class="cell" style="left:852px;top:417px;width:66px;height:20px;background:#ffffc8;line-height:19px;padding-top:2px;text-align:right;padding-right:1px">0,00</div>
<div class="cell" style="left:919px;top:417px;width:66px;height:20px;background:#fdc8c9;line-height:19px;padding-top:2px;text-align:right;padding-right:1px">0,00</div>
<div class="cell" style="left:986px;top:417px;width:66px;height:20px;background:#fdc8c9;line-height:19px;padding-top:2px;text-align:right;padding-right:1px">0,00</div>
<div class="cell" style="left:1053px;top:417px;width:66px;height:20px;background:#fdc8c9;line-height:19px;padding-top:2px;text-align:right;padding-right:1px">0,00</div>
<div class="a" style="left:31px;top:437px;width:32px;height:20px;background:#efefef;border-bottom:1px solid #8c8c8c;border-right:1px solid #a8a8a8;border-top:1px solid #fff;border-left:1px solid #fff;font-size:12px;text-align:center;line-height:18px;padding-top:1px;color:#000">13</div>
<div class="cell" style="left:64px;top:437px;width:80px;height:20px;background:#fff;line-height:19px;padding-top:2px;text-align:center">28.02.2025</div>
<div class="cell" style="left:145px;top:437px;width:52px;height:20px;background:#fff;line-height:19px;padding-top:2px;text-align:center">10000</div>
<div class="cell" style="left:198px;top:437px;width:232px;height:20px;background:#fff;line-height:19px;padding-top:2px;text-align:left;padding-left:8px;letter-spacing:-0.35px">Sülfeld GmbH</div>
<div class="cell" style="left:431px;top:437px;width:59px;height:20px;background:#fff;line-height:19px;padding-top:2px;text-align:left;padding-left:8px;letter-spacing:0.3px">14</div>
<div class="cell" style="left:491px;top:437px;width:79px;height:20px;background:#fff;line-height:19px;padding-top:2px;text-align:left;padding-left:8px;letter-spacing:0px">Rechnung</div>
<div class="cell" style="left:571px;top:437px;width:79px;height:20px;background:#cfd200;line-height:19px;padding-top:2px;text-align:right;padding-right:1px">14,71</div>
<div class="cell" style="left:651px;top:437px;width:66px;height:20px;background:#ffffc8;line-height:19px;padding-top:2px;text-align:right;padding-right:1px">0,00</div>
<div class="cell" style="left:718px;top:437px;width:66px;height:20px;background:#ffffc8;line-height:19px;padding-top:2px;text-align:right;padding-right:1px">0,00</div>
<div class="cell" style="left:785px;top:437px;width:66px;height:20px;background:#ffffc8;line-height:19px;padding-top:2px;text-align:right;padding-right:1px">14,71</div>
<div class="cell" style="left:852px;top:437px;width:66px;height:20px;background:#ffffc8;line-height:19px;padding-top:2px;text-align:right;padding-right:1px">0,00</div>
<div class="cell" style="left:919px;top:437px;width:66px;height:20px;background:#fdc8c9;line-height:19px;padding-top:2px;text-align:right;padding-right:1px">0,00</div>
<div class="cell" style="left:986px;top:437px;width:66px;height:20px;background:#fdc8c9;line-height:19px;padding-top:2px;text-align:right;padding-right:1px">0,00</div>
<div class="cell" style="left:1053px;top:437px;width:66px;height:20px;background:#fdc8c9;line-height:19px;padding-top:2px;text-align:right;padding-right:1px">0,00</div>
<div class="a" style="left:31px;top:457px;width:32px;height:20px;background:#efefef;border-bottom:1px solid #8c8c8c;border-right:1px solid #a8a8a8;border-top:1px solid #fff;border-left:1px solid #fff;font-size:12px;text-align:center;line-height:18px;padding-top:1px;color:#000">14</div>
<div class="cell" style="left:64px;top:457px;width:80px;height:20px;background:#fff;line-height:19px;padding-top:2px;text-align:center">28.02.2025</div>
<div class="cell" style="left:145px;top:457px;width:52px;height:20px;background:#fff;line-height:19px;padding-top:2px;text-align:center">10000</div>
<div class="cell" style="left:198px;top:457px;width:232px;height:20px;background:#fff;line-height:19px;padding-top:2px;text-align:left;padding-left:8px;letter-spacing:-0.35px">Sülfeld GmbH</div>
<div class="cell" style="left:431px;top:457px;width:59px;height:20px;background:#fff;line-height:19px;padding-top:2px;text-align:left;padding-left:8px;letter-spacing:0.3px">15</div>
<div class="cell" style="left:491px;top:457px;width:79px;height:20px;background:#fff;line-height:19px;padding-top:2px;text-align:left;padding-left:8px;letter-spacing:0px">Rechnung</div>
<div class="cell" style="left:571px;top:457px;width:79px;height:20px;background:#cfd200;line-height:19px;padding-top:2px;text-align:right;padding-right:1px">73,54</div>
<div class="cell" style="left:651px;top:457px;width:66px;height:20px;background:#ffffc8;line-height:19px;padding-top:2px;text-align:right;padding-right:1px">0,00</div>
<div class="cell" style="left:718px;top:457px;width:66px;height:20px;background:#ffffc8;line-height:19px;padding-top:2px;text-align:right;padding-right:1px">0,00</div>
<div class="cell" style="left:785px;top:457px;width:66px;height:20px;background:#ffffc8;line-height:19px;padding-top:2px;text-align:right;padding-right:1px">73,54</div>
<div class="cell" style="left:852px;top:457px;width:66px;height:20px;background:#ffffc8;line-height:19px;padding-top:2px;text-align:right;padding-right:1px">0,00</div>
<div class="cell" style="left:919px;top:457px;width:66px;height:20px;background:#fdc8c9;line-height:19px;padding-top:2px;text-align:right;padding-right:1px">0,00</div>
<div class="cell" style="left:986px;top:457px;width:66px;height:20px;background:#fdc8c9;line-height:19px;padding-top:2px;text-align:right;padding-right:1px">0,00</div>
<div class="cell" style="left:1053px;top:457px;width:66px;height:20px;background:#fdc8c9;line-height:19px;padding-top:2px;text-align:right;padding-right:1px">0,00</div>
<div class="a" style="left:31px;top:477px;width:32px;height:20px;background:#efefef;border-bottom:1px solid #8c8c8c;border-right:1px solid #a8a8a8;border-top:1px solid #fff;border-left:1px solid #fff;font-size:12px;text-align:center;line-height:18px;padding-top:1px;color:#000">15</div>
<div class="cell" style="left:64px;top:477px;width:80px;height:20px;background:#fff;line-height:19px;padding-top:2px;text-align:center">28.02.2025</div>
<div class="cell" style="left:145px;top:477px;width:52px;height:20px;background:#fff;line-height:19px;padding-top:2px;text-align:center">10000</div>
<div class="cell" style="left:198px;top:477px;width:232px;height:20px;background:#fff;line-height:19px;padding-top:2px;text-align:left;padding-left:8px;letter-spacing:-0.35px">Sülfeld GmbH</div>
<div class="cell" style="left:431px;top:477px;width:59px;height:20px;background:#fff;line-height:19px;padding-top:2px;text-align:left;padding-left:8px;letter-spacing:0.3px">92</div>
<div class="cell" style="left:491px;top:477px;width:79px;height:20px;background:#fff;line-height:19px;padding-top:2px;text-align:left;padding-left:8px;letter-spacing:0px">Rechnung</div>
<div class="cell" style="left:571px;top:477px;width:79px;height:20px;background:#cfd200;line-height:19px;padding-top:2px;text-align:right;padding-right:1px">72,85</div>
<div class="cell" style="left:651px;top:477px;width:66px;height:20px;background:#ffffc8;line-height:19px;padding-top:2px;text-align:right;padding-right:1px">0,00</div>
<div class="cell" style="left:718px;top:477px;width:66px;height:20px;background:#ffffc8;line-height:19px;padding-top:2px;text-align:right;padding-right:1px">0,00</div>
<div class="cell" style="left:785px;top:477px;width:66px;height:20px;background:#ffffc8;line-height:19px;padding-top:2px;text-align:right;padding-right:1px">72,85</div>
<div class="cell" style="left:852px;top:477px;width:66px;height:20px;background:#ffffc8;line-height:19px;padding-top:2px;text-align:right;padding-right:1px">0,00</div>
<div class="cell" style="left:919px;top:477px;width:66px;height:20px;background:#fdc8c9;line-height:19px;padding-top:2px;text-align:right;padding-right:1px">0,00</div>
<div class="cell" style="left:986px;top:477px;width:66px;height:20px;background:#fdc8c9;line-height:19px;padding-top:2px;text-align:right;padding-right:1px">0,00</div>
<div class="cell" style="left:1053px;top:477px;width:66px;height:20px;background:#fdc8c9;line-height:19px;padding-top:2px;text-align:right;padding-right:1px">0,00</div>
<div class="a" style="left:31px;top:497px;width:32px;height:20px;background:#efefef;border-bottom:1px solid #8c8c8c;border-right:1px solid #a8a8a8;border-top:1px solid #fff;border-left:1px solid #fff;font-size:12px;text-align:center;line-height:18px;padding-top:1px;color:#000">16</div>
<div class="cell" style="left:64px;top:497px;width:80px;height:20px;background:#fff;line-height:19px;padding-top:2px;text-align:center">28.02.2025</div>
<div class="cell" style="left:145px;top:497px;width:52px;height:20px;background:#fff;line-height:19px;padding-top:2px;text-align:center">10000</div>
<div class="cell" style="left:198px;top:497px;width:232px;height:20px;background:#fff;line-height:19px;padding-top:2px;text-align:left;padding-left:8px;letter-spacing:-0.35px">Sülfeld GmbH</div>
<div class="cell" style="left:431px;top:497px;width:59px;height:20px;background:#fff;line-height:19px;padding-top:2px;text-align:left;padding-left:8px;letter-spacing:0.3px">93</div>
<div class="cell" style="left:491px;top:497px;width:79px;height:20px;background:#fff;line-height:19px;padding-top:2px;text-align:left;padding-left:8px;letter-spacing:0px">Rechnung</div>
<div class="cell" style="left:571px;top:497px;width:79px;height:20px;background:#cfd200;line-height:19px;padding-top:2px;text-align:right;padding-right:1px">25,84</div>
<div class="cell" style="left:651px;top:497px;width:66px;height:20px;background:#ffffc8;line-height:19px;padding-top:2px;text-align:right;padding-right:1px">0,00</div>
<div class="cell" style="left:718px;top:497px;width:66px;height:20px;background:#ffffc8;line-height:19px;padding-top:2px;text-align:right;padding-right:1px">0,00</div>
<div class="cell" style="left:785px;top:497px;width:66px;height:20px;background:#ffffc8;line-height:19px;padding-top:2px;text-align:right;padding-right:1px">25,84</div>
<div class="cell" style="left:852px;top:497px;width:66px;height:20px;background:#ffffc8;line-height:19px;padding-top:2px;text-align:right;padding-right:1px">0,00</div>
<div class="cell" style="left:919px;top:497px;width:66px;height:20px;background:#fdc8c9;line-height:19px;padding-top:2px;text-align:right;padding-right:1px">0,00</div>
<div class="cell" style="left:986px;top:497px;width:66px;height:20px;background:#fdc8c9;line-height:19px;padding-top:2px;text-align:right;padding-right:1px">0,00</div>
<div class="cell" style="left:1053px;top:497px;width:66px;height:20px;background:#fdc8c9;line-height:19px;padding-top:2px;text-align:right;padding-right:1px">0,00</div>
<div class="a" style="left:31px;top:517px;width:32px;height:20px;background:#efefef;border-bottom:1px solid #8c8c8c;border-right:1px solid #a8a8a8;border-top:1px solid #fff;border-left:1px solid #fff;font-size:12px;text-align:center;line-height:18px;padding-top:1px;color:#000">17</div>
<div class="cell" style="left:64px;top:517px;width:80px;height:20px;background:#fff;line-height:19px;padding-top:2px;text-align:center">09.04.2025</div>
<div class="cell" style="left:145px;top:517px;width:52px;height:20px;background:#fff;line-height:19px;padding-top:2px;text-align:center">10000</div>
<div class="cell" style="left:198px;top:517px;width:232px;height:20px;background:#fff;line-height:19px;padding-top:2px;text-align:left;padding-left:8px;letter-spacing:-0.35px">Sülfeld GmbH</div>
<div class="cell" style="left:431px;top:517px;width:59px;height:20px;background:#fff;line-height:19px;padding-top:2px;text-align:left;padding-left:8px;letter-spacing:0.3px">94</div>
<div class="cell" style="left:491px;top:517px;width:79px;height:20px;background:#fff;line-height:19px;padding-top:2px;text-align:left;padding-left:8px;letter-spacing:0px">Rechnung</div>
<div class="cell" style="left:571px;top:517px;width:79px;height:20px;background:#cfd200;line-height:19px;padding-top:2px;text-align:right;padding-right:1px">25,84</div>
<div class="cell" style="left:651px;top:517px;width:66px;height:20px;background:#ffffc8;line-height:19px;padding-top:2px;text-align:right;padding-right:1px">0,00</div>
<div class="cell" style="left:718px;top:517px;width:66px;height:20px;background:#ffffc8;line-height:19px;padding-top:2px;text-align:right;padding-right:1px">0,00</div>
<div class="cell" style="left:785px;top:517px;width:66px;height:20px;background:#ffffc8;line-height:19px;padding-top:2px;text-align:right;padding-right:1px">25,84</div>
<div class="cell" style="left:852px;top:517px;width:66px;height:20px;background:#ffffc8;line-height:19px;padding-top:2px;text-align:right;padding-right:1px">0,00</div>
<div class="cell" style="left:919px;top:517px;width:66px;height:20px;background:#fdc8c9;line-height:19px;padding-top:2px;text-align:right;padding-right:1px">0,00</div>
<div class="cell" style="left:986px;top:517px;width:66px;height:20px;background:#fdc8c9;line-height:19px;padding-top:2px;text-align:right;padding-right:1px">0,00</div>
<div class="cell" style="left:1053px;top:517px;width:66px;height:20px;background:#fdc8c9;line-height:19px;padding-top:2px;text-align:right;padding-right:1px">0,00</div>
<div class="a" style="left:31px;top:537px;width:32px;height:20px;background:#efefef;border-bottom:1px solid #8c8c8c;border-right:1px solid #a8a8a8;border-top:1px solid #fff;border-left:1px solid #fff;font-size:12px;text-align:center;line-height:18px;padding-top:1px;color:#000">18</div>
<div class="cell" style="left:64px;top:537px;width:80px;height:20px;background:#fff;line-height:19px;padding-top:2px;text-align:center">09.04.2025</div>
<div class="cell" style="left:145px;top:537px;width:52px;height:20px;background:#fff;line-height:19px;padding-top:2px;text-align:center">10000</div>
<div class="cell" style="left:198px;top:537px;width:232px;height:20px;background:#fff;line-height:19px;padding-top:2px;text-align:left;padding-left:8px;letter-spacing:-0.35px">Sülfeld GmbH</div>
<div class="cell" style="left:431px;top:537px;width:59px;height:20px;background:#fff;line-height:19px;padding-top:2px;text-align:left;padding-left:8px;letter-spacing:0.3px">95</div>
<div class="cell" style="left:491px;top:537px;width:79px;height:20px;background:#fff;line-height:19px;padding-top:2px;text-align:left;padding-left:8px;letter-spacing:0px">Rechnung</div>
<div class="cell" style="left:571px;top:537px;width:79px;height:20px;background:#cfd200;line-height:19px;padding-top:2px;text-align:right;padding-right:1px">21,17</div>
<div class="cell" style="left:651px;top:537px;width:66px;height:20px;background:#ffffc8;line-height:19px;padding-top:2px;text-align:right;padding-right:1px">0,00</div>
<div class="cell" style="left:718px;top:537px;width:66px;height:20px;background:#ffffc8;line-height:19px;padding-top:2px;text-align:right;padding-right:1px">0,00</div>
<div class="cell" style="left:785px;top:537px;width:66px;height:20px;background:#ffffc8;line-height:19px;padding-top:2px;text-align:right;padding-right:1px">21,17</div>
<div class="cell" style="left:852px;top:537px;width:66px;height:20px;background:#ffffc8;line-height:19px;padding-top:2px;text-align:right;padding-right:1px">0,00</div>
<div class="cell" style="left:919px;top:537px;width:66px;height:20px;background:#fdc8c9;line-height:19px;padding-top:2px;text-align:right;padding-right:1px">0,00</div>
<div class="cell" style="left:986px;top:537px;width:66px;height:20px;background:#fdc8c9;line-height:19px;padding-top:2px;text-align:right;padding-right:1px">0,00</div>
<div class="cell" style="left:1053px;top:537px;width:66px;height:20px;background:#fdc8c9;line-height:19px;padding-top:2px;text-align:right;padding-right:1px">0,00</div>
<div class="a" style="left:31px;top:557px;width:32px;height:20px;background:#efefef;border-bottom:1px solid #8c8c8c;border-right:1px solid #a8a8a8;border-top:1px solid #fff;border-left:1px solid #fff;font-size:12px;text-align:center;line-height:18px;padding-top:1px;color:#000">19</div>
<div class="cell" style="left:64px;top:557px;width:80px;height:20px;background:#fff;line-height:19px;padding-top:2px;text-align:center">09.04.2025</div>
<div class="cell" style="left:145px;top:557px;width:52px;height:20px;background:#fff;line-height:19px;padding-top:2px;text-align:center">10000</div>
<div class="cell" style="left:198px;top:557px;width:232px;height:20px;background:#fff;line-height:19px;padding-top:2px;text-align:left;padding-left:8px;letter-spacing:-0.35px">Sülfeld GmbH</div>
<div class="cell" style="left:431px;top:557px;width:59px;height:20px;background:#fff;line-height:19px;padding-top:2px;text-align:left;padding-left:8px;letter-spacing:0.3px">96</div>
<div class="cell" style="left:491px;top:557px;width:79px;height:20px;background:#fff;line-height:19px;padding-top:2px;text-align:left;padding-left:8px;letter-spacing:0px">Rechnung</div>
<div class="cell" style="left:571px;top:557px;width:79px;height:20px;background:#cfd200;line-height:19px;padding-top:2px;text-align:right;padding-right:1px">52,57</div>
<div class="cell" style="left:651px;top:557px;width:66px;height:20px;background:#ffffc8;line-height:19px;padding-top:2px;text-align:right;padding-right:1px">0,00</div>
<div class="cell" style="left:718px;top:557px;width:66px;height:20px;background:#ffffc8;line-height:19px;padding-top:2px;text-align:right;padding-right:1px">0,00</div>
<div class="cell" style="left:785px;top:557px;width:66px;height:20px;background:#ffffc8;line-height:19px;padding-top:2px;text-align:right;padding-right:1px">52,57</div>
<div class="cell" style="left:852px;top:557px;width:66px;height:20px;background:#ffffc8;line-height:19px;padding-top:2px;text-align:right;padding-right:1px">0,00</div>
<div class="cell" style="left:919px;top:557px;width:66px;height:20px;background:#fdc8c9;line-height:19px;padding-top:2px;text-align:right;padding-right:1px">0,00</div>
<div class="cell" style="left:986px;top:557px;width:66px;height:20px;background:#fdc8c9;line-height:19px;padding-top:2px;text-align:right;padding-right:1px">0,00</div>
<div class="cell" style="left:1053px;top:557px;width:66px;height:20px;background:#fdc8c9;line-height:19px;padding-top:2px;text-align:right;padding-right:1px">0,00</div>
<div class="a" style="left:31px;top:577px;width:32px;height:20px;background:#efefef;border-bottom:1px solid #8c8c8c;border-right:1px solid #a8a8a8;border-top:1px solid #fff;border-left:1px solid #fff;font-size:12px;text-align:center;line-height:18px;padding-top:1px;color:#000">20</div>
<div class="cell" style="left:64px;top:577px;width:80px;height:20px;background:#fff;line-height:19px;padding-top:2px;text-align:center">09.04.2025</div>
<div class="cell" style="left:145px;top:577px;width:52px;height:20px;background:#fff;line-height:19px;padding-top:2px;text-align:center">10000</div>
<div class="cell" style="left:198px;top:577px;width:232px;height:20px;background:#fff;line-height:19px;padding-top:2px;text-align:left;padding-left:8px;letter-spacing:-0.35px">Sülfeld GmbH</div>
<div class="cell" style="left:431px;top:577px;width:59px;height:20px;background:#fff;line-height:19px;padding-top:2px;text-align:left;padding-left:8px;letter-spacing:0.3px">97</div>
<div class="cell" style="left:491px;top:577px;width:79px;height:20px;background:#fff;line-height:19px;padding-top:2px;text-align:left;padding-left:8px;letter-spacing:0px">Rechnung</div>
<div class="cell" style="left:571px;top:577px;width:79px;height:20px;background:#cfd200;line-height:19px;padding-top:2px;text-align:right;padding-right:1px">25,84</div>
<div class="cell" style="left:651px;top:577px;width:66px;height:20px;background:#ffffc8;line-height:19px;padding-top:2px;text-align:right;padding-right:1px">0,00</div>
<div class="cell" style="left:718px;top:577px;width:66px;height:20px;background:#ffffc8;line-height:19px;padding-top:2px;text-align:right;padding-right:1px">0,00</div>
<div class="cell" style="left:785px;top:577px;width:66px;height:20px;background:#ffffc8;line-height:19px;padding-top:2px;text-align:right;padding-right:1px">25,84</div>
<div class="cell" style="left:852px;top:577px;width:66px;height:20px;background:#ffffc8;line-height:19px;padding-top:2px;text-align:right;padding-right:1px">0,00</div>
<div class="cell" style="left:919px;top:577px;width:66px;height:20px;background:#fdc8c9;line-height:19px;padding-top:2px;text-align:right;padding-right:1px">0,00</div>
<div class="cell" style="left:986px;top:577px;width:66px;height:20px;background:#fdc8c9;line-height:19px;padding-top:2px;text-align:right;padding-right:1px">0,00</div>
<div class="cell" style="left:1053px;top:577px;width:66px;height:20px;background:#fdc8c9;line-height:19px;padding-top:2px;text-align:right;padding-right:1px">0,00</div>
<div class="a" style="left:31px;top:597px;width:32px;height:20px;background:#efefef;border-bottom:1px solid #8c8c8c;border-right:1px solid #a8a8a8;border-top:1px solid #fff;border-left:1px solid #fff;font-size:12px;text-align:center;line-height:18px;padding-top:1px;color:#000">21</div>
<div class="cell" style="left:64px;top:597px;width:80px;height:20px;background:#fff;line-height:19px;padding-top:2px;text-align:center">09.04.2025</div>
<div class="cell" style="left:145px;top:597px;width:52px;height:20px;background:#fff;line-height:19px;padding-top:2px;text-align:center">10000</div>
<div class="cell" style="left:198px;top:597px;width:232px;height:20px;background:#fff;line-height:19px;padding-top:2px;text-align:left;padding-left:8px;letter-spacing:-0.35px">Sülfeld GmbH</div>
<div class="cell" style="left:431px;top:597px;width:59px;height:20px;background:#fff;line-height:19px;padding-top:2px;text-align:left;padding-left:8px;letter-spacing:0.3px">98</div>
<div class="cell" style="left:491px;top:597px;width:79px;height:20px;background:#fff;line-height:19px;padding-top:2px;text-align:left;padding-left:8px;letter-spacing:0px">Rechnung</div>
<div class="cell" style="left:571px;top:597px;width:79px;height:20px;background:#cfd200;line-height:19px;padding-top:2px;text-align:right;padding-right:1px">47,01</div>
<div class="cell" style="left:651px;top:597px;width:66px;height:20px;background:#ffffc8;line-height:19px;padding-top:2px;text-align:right;padding-right:1px">0,00</div>
<div class="cell" style="left:718px;top:597px;width:66px;height:20px;background:#ffffc8;line-height:19px;padding-top:2px;text-align:right;padding-right:1px">0,00</div>
<div class="cell" style="left:785px;top:597px;width:66px;height:20px;background:#ffffc8;line-height:19px;padding-top:2px;text-align:right;padding-right:1px">47,01</div>
<div class="cell" style="left:852px;top:597px;width:66px;height:20px;background:#ffffc8;line-height:19px;padding-top:2px;text-align:right;padding-right:1px">0,00</div>
<div class="cell" style="left:919px;top:597px;width:66px;height:20px;background:#fdc8c9;line-height:19px;padding-top:2px;text-align:right;padding-right:1px">0,00</div>
<div class="cell" style="left:986px;top:597px;width:66px;height:20px;background:#fdc8c9;line-height:19px;padding-top:2px;text-align:right;padding-right:1px">0,00</div>
<div class="cell" style="left:1053px;top:597px;width:66px;height:20px;background:#fdc8c9;line-height:19px;padding-top:2px;text-align:right;padding-right:1px">0,00</div>
<div class="a" style="left:31px;top:617px;width:32px;height:20px;background:#efefef;border-bottom:1px solid #8c8c8c;border-right:1px solid #a8a8a8;border-top:1px solid #fff;border-left:1px solid #fff;font-size:12px;text-align:center;line-height:18px;padding-top:1px;color:#000">22</div>
<div class="cell" style="left:64px;top:617px;width:80px;height:20px;background:#fff;line-height:19px;padding-top:2px;text-align:center">09.04.2025</div>
<div class="cell" style="left:145px;top:617px;width:52px;height:20px;background:#fff;line-height:19px;padding-top:2px;text-align:center">10000</div>
<div class="cell" style="left:198px;top:617px;width:232px;height:20px;background:#fff;line-height:19px;padding-top:2px;text-align:left;padding-left:8px;letter-spacing:-0.35px">Sülfeld GmbH</div>
<div class="cell" style="left:431px;top:617px;width:59px;height:20px;background:#fff;line-height:19px;padding-top:2px;text-align:left;padding-left:8px;letter-spacing:0.3px">99</div>
<div class="cell" style="left:491px;top:617px;width:79px;height:20px;background:#fff;line-height:19px;padding-top:2px;text-align:left;padding-left:8px;letter-spacing:0px">Rechnung</div>
<div class="cell" style="left:571px;top:617px;width:79px;height:20px;background:#cfd200;line-height:19px;padding-top:2px;text-align:right;padding-right:1px">147,63</div>
<div class="cell" style="left:651px;top:617px;width:66px;height:20px;background:#ffffc8;line-height:19px;padding-top:2px;text-align:right;padding-right:1px">0,00</div>
<div class="cell" style="left:718px;top:617px;width:66px;height:20px;background:#ffffc8;line-height:19px;padding-top:2px;text-align:right;padding-right:1px">51,70</div>
<div class="cell" style="left:785px;top:617px;width:66px;height:20px;background:#ffffc8;line-height:19px;padding-top:2px;text-align:right;padding-right:1px">95,93</div>
<div class="cell" style="left:852px;top:617px;width:66px;height:20px;background:#ffffc8;line-height:19px;padding-top:2px;text-align:right;padding-right:1px">0,00</div>
<div class="cell" style="left:919px;top:617px;width:66px;height:20px;background:#fdc8c9;line-height:19px;padding-top:2px;text-align:right;padding-right:1px">0,00</div>
<div class="cell" style="left:986px;top:617px;width:66px;height:20px;background:#fdc8c9;line-height:19px;padding-top:2px;text-align:right;padding-right:1px">0,00</div>
<div class="cell" style="left:1053px;top:617px;width:66px;height:20px;background:#fdc8c9;line-height:19px;padding-top:2px;text-align:right;padding-right:1px">0,00</div>
<div class="a" style="left:31px;top:637px;width:32px;height:20px;background:#efefef;border-bottom:1px solid #8c8c8c;border-right:1px solid #a8a8a8;border-top:1px solid #fff;border-left:1px solid #fff;font-size:12px;text-align:center;line-height:18px;padding-top:1px;color:#000">23</div>
<div class="cell" style="left:64px;top:637px;width:80px;height:20px;background:#fff;line-height:19px;padding-top:2px;text-align:center">09.04.2025</div>
<div class="cell" style="left:145px;top:637px;width:52px;height:20px;background:#fff;line-height:19px;padding-top:2px;text-align:center">10000</div>
<div class="cell" style="left:198px;top:637px;width:232px;height:20px;background:#fff;line-height:19px;padding-top:2px;text-align:left;padding-left:8px;letter-spacing:-0.35px">Sülfeld GmbH</div>
<div class="cell" style="left:431px;top:637px;width:59px;height:20px;background:#fff;line-height:19px;padding-top:2px;text-align:left;padding-left:8px;letter-spacing:0.3px">100</div>
<div class="cell" style="left:491px;top:637px;width:79px;height:20px;background:#fff;line-height:19px;padding-top:2px;text-align:left;padding-left:8px;letter-spacing:0px">Rechnung</div>
<div class="cell" style="left:571px;top:637px;width:79px;height:20px;background:#cfd200;line-height:19px;padding-top:2px;text-align:right;padding-right:1px">47,01</div>
<div class="cell" style="left:651px;top:637px;width:66px;height:20px;background:#ffffc8;line-height:19px;padding-top:2px;text-align:right;padding-right:1px">0,00</div>
<div class="cell" style="left:718px;top:637px;width:66px;height:20px;background:#ffffc8;line-height:19px;padding-top:2px;text-align:right;padding-right:1px">0,00</div>
<div class="cell" style="left:785px;top:637px;width:66px;height:20px;background:#ffffc8;line-height:19px;padding-top:2px;text-align:right;padding-right:1px">47,01</div>
<div class="cell" style="left:852px;top:637px;width:66px;height:20px;background:#ffffc8;line-height:19px;padding-top:2px;text-align:right;padding-right:1px">0,00</div>
<div class="cell" style="left:919px;top:637px;width:66px;height:20px;background:#fdc8c9;line-height:19px;padding-top:2px;text-align:right;padding-right:1px">0,00</div>
<div class="cell" style="left:986px;top:637px;width:66px;height:20px;background:#fdc8c9;line-height:19px;padding-top:2px;text-align:right;padding-right:1px">0,00</div>
<div class="cell" style="left:1053px;top:637px;width:66px;height:20px;background:#fdc8c9;line-height:19px;padding-top:2px;text-align:right;padding-right:1px">0,00</div>
<div class="a" style="left:31px;top:657px;width:32px;height:20px;background:#efefef;border-bottom:1px solid #8c8c8c;border-right:1px solid #a8a8a8;border-top:1px solid #fff;border-left:1px solid #fff;font-size:12px;text-align:center;line-height:18px;padding-top:1px;color:#000">24</div>
<div class="cell" style="left:64px;top:657px;width:80px;height:20px;background:#fff;line-height:19px;padding-top:2px;text-align:center">10.04.2025</div>
<div class="cell" style="left:145px;top:657px;width:52px;height:20px;background:#fff;line-height:19px;padding-top:2px;text-align:center">10000</div>
<div class="cell" style="left:198px;top:657px;width:232px;height:20px;background:#fff;line-height:19px;padding-top:2px;text-align:left;padding-left:8px;letter-spacing:-0.35px">Sülfeld GmbH</div>
<div class="cell" style="left:431px;top:657px;width:59px;height:20px;background:#fff;line-height:19px;padding-top:2px;text-align:left;padding-left:8px;letter-spacing:0.3px">101</div>
<div class="cell" style="left:491px;top:657px;width:79px;height:20px;background:#fff;line-height:19px;padding-top:2px;text-align:left;padding-left:8px;letter-spacing:0px">Rechnung</div>
<div class="cell" style="left:571px;top:657px;width:79px;height:20px;background:#cfd200;line-height:19px;padding-top:2px;text-align:right;padding-right:1px">96,21</div>
<div class="cell" style="left:651px;top:657px;width:66px;height:20px;background:#ffffc8;line-height:19px;padding-top:2px;text-align:right;padding-right:1px">0,00</div>
<div class="cell" style="left:718px;top:657px;width:66px;height:20px;background:#ffffc8;line-height:19px;padding-top:2px;text-align:right;padding-right:1px">0,00</div>
<div class="cell" style="left:785px;top:657px;width:66px;height:20px;background:#ffffc8;line-height:19px;padding-top:2px;text-align:right;padding-right:1px">96,21</div>
<div class="cell" style="left:852px;top:657px;width:66px;height:20px;background:#ffffc8;line-height:19px;padding-top:2px;text-align:right;padding-right:1px">0,00</div>
<div class="cell" style="left:919px;top:657px;width:66px;height:20px;background:#fdc8c9;line-height:19px;padding-top:2px;text-align:right;padding-right:1px">0,00</div>
<div class="cell" style="left:986px;top:657px;width:66px;height:20px;background:#fdc8c9;line-height:19px;padding-top:2px;text-align:right;padding-right:1px">0,00</div>
<div class="cell" style="left:1053px;top:657px;width:66px;height:20px;background:#fdc8c9;line-height:19px;padding-top:2px;text-align:right;padding-right:1px">0,00</div>
<div class="a" style="left:31px;top:677px;width:32px;height:20px;background:#efefef;border-bottom:1px solid #8c8c8c;border-right:1px solid #a8a8a8;border-top:1px solid #fff;border-left:1px solid #fff;font-size:12px;text-align:center;line-height:18px;padding-top:1px;color:#000">25</div>
<div class="cell" style="left:64px;top:677px;width:80px;height:20px;background:#fff;line-height:19px;padding-top:2px;text-align:center">07.05.2025</div>
<div class="cell" style="left:145px;top:677px;width:52px;height:20px;background:#fff;line-height:19px;padding-top:2px;text-align:center">10000</div>
<div class="cell" style="left:198px;top:677px;width:232px;height:20px;background:#fff;line-height:19px;padding-top:2px;text-align:left;padding-left:8px;letter-spacing:-0.35px">Sülfeld GmbH</div>
<div class="cell" style="left:431px;top:677px;width:59px;height:20px;background:#fff;line-height:19px;padding-top:2px;text-align:left;padding-left:8px;letter-spacing:0.3px">102</div>
<div class="cell" style="left:491px;top:677px;width:79px;height:20px;background:#fff;line-height:19px;padding-top:2px;text-align:left;padding-left:8px;letter-spacing:0px">Rechnung</div>
<div class="cell" style="left:571px;top:677px;width:79px;height:20px;background:#cfd200;line-height:19px;padding-top:2px;text-align:right;padding-right:1px">101,76</div>
<div class="cell" style="left:651px;top:677px;width:66px;height:20px;background:#ffffc8;line-height:19px;padding-top:2px;text-align:right;padding-right:1px">0,00</div>
<div class="cell" style="left:718px;top:677px;width:66px;height:20px;background:#ffffc8;line-height:19px;padding-top:2px;text-align:right;padding-right:1px">0,00</div>
<div class="cell" style="left:785px;top:677px;width:66px;height:20px;background:#ffffc8;line-height:19px;padding-top:2px;text-align:right;padding-right:1px">101,76</div>
<div class="cell" style="left:852px;top:677px;width:66px;height:20px;background:#ffffc8;line-height:19px;padding-top:2px;text-align:right;padding-right:1px">0,00</div>
<div class="cell" style="left:919px;top:677px;width:66px;height:20px;background:#fdc8c9;line-height:19px;padding-top:2px;text-align:right;padding-right:1px">0,00</div>
<div class="cell" style="left:986px;top:677px;width:66px;height:20px;background:#fdc8c9;line-height:19px;padding-top:2px;text-align:right;padding-right:1px">0,00</div>
<div class="cell" style="left:1053px;top:677px;width:66px;height:20px;background:#fdc8c9;line-height:19px;padding-top:2px;text-align:right;padding-right:1px">0,00</div>
<div class="a" style="left:31px;top:697px;width:32px;height:20px;background:#efefef;border-bottom:1px solid #8c8c8c;border-right:1px solid #a8a8a8;border-top:1px solid #fff;border-left:1px solid #fff;font-size:12px;text-align:center;line-height:18px;padding-top:1px;color:#000">26</div>
<div class="cell" style="left:64px;top:697px;width:80px;height:20px;background:#fff;line-height:19px;padding-top:2px;text-align:center">07.05.2025</div>
<div class="cell" style="left:145px;top:697px;width:52px;height:20px;background:#fff;line-height:19px;padding-top:2px;text-align:center">10000</div>
<div class="cell" style="left:198px;top:697px;width:232px;height:20px;background:#fff;line-height:19px;padding-top:2px;text-align:left;padding-left:8px;letter-spacing:-0.35px">Sülfeld GmbH</div>
<div class="cell" style="left:431px;top:697px;width:59px;height:20px;background:#fff;line-height:19px;padding-top:2px;text-align:left;padding-left:8px;letter-spacing:0.3px">103</div>
<div class="cell" style="left:491px;top:697px;width:79px;height:20px;background:#fff;line-height:19px;padding-top:2px;text-align:left;padding-left:8px;letter-spacing:0px">Rechnung</div>
<div class="cell" style="left:571px;top:697px;width:79px;height:20px;background:#cfd200;line-height:19px;padding-top:2px;text-align:right;padding-right:1px">101,77</div>
<div class="cell" style="left:651px;top:697px;width:66px;height:20px;background:#ffffc8;line-height:19px;padding-top:2px;text-align:right;padding-right:1px">0,00</div>
<div class="cell" style="left:718px;top:697px;width:66px;height:20px;background:#ffffc8;line-height:19px;padding-top:2px;text-align:right;padding-right:1px">0,00</div>
<div class="cell" style="left:785px;top:697px;width:66px;height:20px;background:#ffffc8;line-height:19px;padding-top:2px;text-align:right;padding-right:1px">101,77</div>
<div class="cell" style="left:852px;top:697px;width:66px;height:20px;background:#ffffc8;line-height:19px;padding-top:2px;text-align:right;padding-right:1px">0,00</div>
<div class="cell" style="left:919px;top:697px;width:66px;height:20px;background:#fdc8c9;line-height:19px;padding-top:2px;text-align:right;padding-right:1px">0,00</div>
<div class="cell" style="left:986px;top:697px;width:66px;height:20px;background:#fdc8c9;line-height:19px;padding-top:2px;text-align:right;padding-right:1px">0,00</div>
<div class="cell" style="left:1053px;top:697px;width:66px;height:20px;background:#fdc8c9;line-height:19px;padding-top:2px;text-align:right;padding-right:1px">0,00</div>
<div class="a" style="left:31px;top:717px;width:32px;height:20px;background:#efefef;border-bottom:1px solid #8c8c8c;border-right:1px solid #a8a8a8;border-top:1px solid #fff;border-left:1px solid #fff;font-size:12px;text-align:center;line-height:18px;padding-top:1px;color:#000">27</div>
<div class="cell" style="left:64px;top:717px;width:80px;height:20px;background:#fff;line-height:19px;padding-top:2px;text-align:center">30.07.2025</div>
<div class="cell" style="left:145px;top:717px;width:52px;height:20px;background:#fff;line-height:19px;padding-top:2px;text-align:center">10001</div>
<div class="cell" style="left:198px;top:717px;width:232px;height:20px;background:#fff;line-height:19px;padding-top:2px;text-align:left;padding-left:8px;letter-spacing:-0.35px">Friedersdorf GmbH</div>
<div class="cell" style="left:431px;top:717px;width:59px;height:20px;background:#fff;line-height:19px;padding-top:2px;text-align:left;padding-left:8px;letter-spacing:0.3px">104</div>
<div class="cell" style="left:491px;top:717px;width:79px;height:20px;background:#fff;line-height:19px;padding-top:2px;text-align:left;padding-left:8px;letter-spacing:0px">Rechnung</div>
<div class="cell" style="left:571px;top:717px;width:79px;height:20px;background:#cfd200;line-height:19px;padding-top:2px;text-align:right;padding-right:1px">490,17</div>
<div class="cell" style="left:651px;top:717px;width:66px;height:20px;background:#ffffc8;line-height:19px;padding-top:2px;text-align:right;padding-right:1px">0,00</div>
<div class="cell" style="left:718px;top:717px;width:66px;height:20px;background:#ffffc8;line-height:19px;padding-top:2px;text-align:right;padding-right:1px">490,17</div>
<div class="cell" style="left:785px;top:717px;width:66px;height:20px;background:#ffffc8;line-height:19px;padding-top:2px;text-align:right;padding-right:1px">0,00</div>
<div class="cell" style="left:852px;top:717px;width:66px;height:20px;background:#ffffc8;line-height:19px;padding-top:2px;text-align:right;padding-right:1px">0,00</div>
<div class="cell" style="left:919px;top:717px;width:66px;height:20px;background:#fdc8c9;line-height:19px;padding-top:2px;text-align:right;padding-right:1px">0,00</div>
<div class="cell" style="left:986px;top:717px;width:66px;height:20px;background:#fdc8c9;line-height:19px;padding-top:2px;text-align:right;padding-right:1px">0,00</div>
<div class="cell" style="left:1053px;top:717px;width:66px;height:20px;background:#fdc8c9;line-height:19px;padding-top:2px;text-align:right;padding-right:1px">0,00</div>
<div class="a" style="left:31px;top:737px;width:32px;height:20px;background:#efefef;border-bottom:1px solid #8c8c8c;border-right:1px solid #a8a8a8;border-top:1px solid #fff;border-left:1px solid #fff;font-size:12px;text-align:center;line-height:18px;padding-top:1px;color:#000">28</div>
<div class="cell" style="left:64px;top:737px;width:80px;height:20px;background:#fff;line-height:19px;padding-top:2px;text-align:center">04.08.2025</div>
<div class="cell" style="left:145px;top:737px;width:52px;height:20px;background:#fff;line-height:19px;padding-top:2px;text-align:center">10001</div>
<div class="cell" style="left:198px;top:737px;width:232px;height:20px;background:#fff;line-height:19px;padding-top:2px;text-align:left;padding-left:8px;letter-spacing:-0.35px">Friedersdorf GmbH</div>
<div class="cell" style="left:431px;top:737px;width:59px;height:20px;background:#fff;line-height:19px;padding-top:2px;text-align:left;padding-left:8px;letter-spacing:0.3px">105</div>
<div class="cell" style="left:491px;top:737px;width:79px;height:20px;background:#fff;line-height:19px;padding-top:2px;text-align:left;padding-left:8px;letter-spacing:0px">Rechnung</div>
<div class="cell" style="left:571px;top:737px;width:79px;height:20px;background:#cfd200;line-height:19px;padding-top:2px;text-align:right;padding-right:1px">651,70</div>
<div class="cell" style="left:651px;top:737px;width:66px;height:20px;background:#ffffc8;line-height:19px;padding-top:2px;text-align:right;padding-right:1px">0,00</div>
<div class="cell" style="left:718px;top:737px;width:66px;height:20px;background:#ffffc8;line-height:19px;padding-top:2px;text-align:right;padding-right:1px">651,70</div>
<div class="cell" style="left:785px;top:737px;width:66px;height:20px;background:#ffffc8;line-height:19px;padding-top:2px;text-align:right;padding-right:1px">0,00</div>
<div class="cell" style="left:852px;top:737px;width:66px;height:20px;background:#ffffc8;line-height:19px;padding-top:2px;text-align:right;padding-right:1px">0,00</div>
<div class="cell" style="left:919px;top:737px;width:66px;height:20px;background:#fdc8c9;line-height:19px;padding-top:2px;text-align:right;padding-right:1px">0,00</div>
<div class="cell" style="left:986px;top:737px;width:66px;height:20px;background:#fdc8c9;line-height:19px;padding-top:2px;text-align:right;padding-right:1px">0,00</div>
<div class="cell" style="left:1053px;top:737px;width:66px;height:20px;background:#fdc8c9;line-height:19px;padding-top:2px;text-align:right;padding-right:1px">0,00</div>
<div class="a" style="left:31px;top:757px;width:32px;height:20px;background:#efefef;border-bottom:1px solid #8c8c8c;border-right:1px solid #a8a8a8;border-top:1px solid #fff;border-left:1px solid #fff;font-size:12px;text-align:center;line-height:18px;padding-top:1px;color:#000">29</div>
<div class="cell" style="left:64px;top:757px;width:80px;height:20px;background:#fff;line-height:19px;padding-top:2px;text-align:center">11.08.2025</div>
<div class="cell" style="left:145px;top:757px;width:52px;height:20px;background:#fff;line-height:19px;padding-top:2px;text-align:center">10001</div>
<div class="cell" style="left:198px;top:757px;width:232px;height:20px;background:#fff;line-height:19px;padding-top:2px;text-align:left;padding-left:8px;letter-spacing:-0.35px">Friedersdorf GmbH</div>
<div class="cell" style="left:431px;top:757px;width:59px;height:20px;background:#fff;line-height:19px;padding-top:2px;text-align:left;padding-left:8px;letter-spacing:0.3px">106</div>
<div class="cell" style="left:491px;top:757px;width:79px;height:20px;background:#fff;line-height:19px;padding-top:2px;text-align:left;padding-left:8px;letter-spacing:0px">Rechnung</div>
<div class="cell" style="left:571px;top:757px;width:79px;height:20px;background:#cfd200;line-height:19px;padding-top:2px;text-align:right;padding-right:1px">1.333,69</div>
<div class="cell" style="left:651px;top:757px;width:66px;height:20px;background:#ffffc8;line-height:19px;padding-top:2px;text-align:right;padding-right:1px">0,00</div>
<div class="cell" style="left:718px;top:757px;width:66px;height:20px;background:#ffffc8;line-height:19px;padding-top:2px;text-align:right;padding-right:1px">980,69</div>
<div class="cell" style="left:785px;top:757px;width:66px;height:20px;background:#ffffc8;line-height:19px;padding-top:2px;text-align:right;padding-right:1px">353,00</div>
<div class="cell" style="left:852px;top:757px;width:66px;height:20px;background:#ffffc8;line-height:19px;padding-top:2px;text-align:right;padding-right:1px">0,00</div>
<div class="cell" style="left:919px;top:757px;width:66px;height:20px;background:#fdc8c9;line-height:19px;padding-top:2px;text-align:right;padding-right:1px">0,00</div>
<div class="cell" style="left:986px;top:757px;width:66px;height:20px;background:#fdc8c9;line-height:19px;padding-top:2px;text-align:right;padding-right:1px">0,00</div>
<div class="cell" style="left:1053px;top:757px;width:66px;height:20px;background:#fdc8c9;line-height:19px;padding-top:2px;text-align:right;padding-right:1px">0,00</div>
<div class="a" style="left:31px;top:777px;width:32px;height:20px;background:#efefef;border-bottom:1px solid #8c8c8c;border-right:1px solid #a8a8a8;border-top:1px solid #fff;border-left:1px solid #fff;font-size:12px;text-align:center;line-height:18px;padding-top:1px;color:#000">30</div>
<div class="cell" style="left:64px;top:777px;width:80px;height:21px;background:#fff;line-height:19px;padding-top:2px;text-align:center">15.08.2025</div>
<div class="cell" style="left:145px;top:777px;width:52px;height:21px;background:#fff;line-height:19px;padding-top:2px;text-align:center">10001</div>
<div class="cell" style="left:198px;top:777px;width:232px;height:21px;background:#fff;line-height:19px;padding-top:2px;text-align:left;padding-left:8px;letter-spacing:-0.35px">Friedersdorf GmbH</div>
<div class="cell" style="left:431px;top:777px;width:59px;height:21px;background:#fff;line-height:19px;padding-top:2px;text-align:left;padding-left:8px;letter-spacing:0.3px">3</div>
<div class="cell" style="left:491px;top:777px;width:79px;height:21px;background:#fff;line-height:19px;padding-top:2px;text-align:left;padding-left:8px;letter-spacing:0px">Gutschrift</div>
<div class="cell" style="left:571px;top:777px;width:79px;height:21px;background:#cfd200;line-height:19px;padding-top:2px;text-align:right;padding-right:1px">-29,42</div>
<div class="cell" style="left:651px;top:777px;width:66px;height:21px;background:#ffffc8;line-height:19px;padding-top:2px;text-align:right;padding-right:1px">0,00</div>
<div class="cell" style="left:718px;top:777px;width:66px;height:21px;background:#ffffc8;line-height:19px;padding-top:2px;text-align:right;padding-right:1px">0,00</div>
<div class="cell" style="left:785px;top:777px;width:66px;height:21px;background:#ffffc8;line-height:19px;padding-top:2px;text-align:right;padding-right:1px">-29,42</div>
<div class="cell" style="left:852px;top:777px;width:66px;height:21px;background:#ffffc8;line-height:19px;padding-top:2px;text-align:right;padding-right:1px">0,00</div>
<div class="cell" style="left:919px;top:777px;width:66px;height:21px;background:#fdc8c9;line-height:19px;padding-top:2px;text-align:right;padding-right:1px">0,00</div>
<div class="cell" style="left:986px;top:777px;width:66px;height:21px;background:#fdc8c9;line-height:19px;padding-top:2px;text-align:right;padding-right:1px">0,00</div>
<div class="cell" style="left:1053px;top:777px;width:66px;height:21px;background:#fdc8c9;line-height:19px;padding-top:2px;text-align:right;padding-right:1px">0,00</div>
<div class="a" style="left:64px;top:217px;width:1047px;height:1px;background:rgba(176,176,176,0.55)"></div>
<div class="a" style="left:64px;top:237px;width:1047px;height:1px;background:rgba(176,176,176,0.55)"></div>
<div class="a" style="left:64px;top:257px;width:1047px;height:1px;background:rgba(176,176,176,0.55)"></div>
<div class="a" style="left:64px;top:277px;width:1047px;height:1px;background:rgba(176,176,176,0.55)"></div>
<div class="a" style="left:64px;top:297px;width:1047px;height:1px;background:rgba(176,176,176,0.55)"></div>
<div class="a" style="left:64px;top:317px;width:1047px;height:1px;background:rgba(176,176,176,0.55)"></div>
<div class="a" style="left:64px;top:337px;width:1047px;height:1px;background:rgba(176,176,176,0.55)"></div>
<div class="a" style="left:64px;top:357px;width:1047px;height:1px;background:rgba(176,176,176,0.55)"></div>
<div class="a" style="left:64px;top:377px;width:1047px;height:1px;background:rgba(176,176,176,0.55)"></div>
<div class="a" style="left:64px;top:397px;width:1047px;height:1px;background:rgba(176,176,176,0.55)"></div>
<div class="a" style="left:64px;top:417px;width:1047px;height:1px;background:rgba(176,176,176,0.55)"></div>
<div class="a" style="left:64px;top:437px;width:1047px;height:1px;background:rgba(176,176,176,0.55)"></div>
<div class="a" style="left:64px;top:457px;width:1047px;height:1px;background:rgba(176,176,176,0.55)"></div>
<div class="a" style="left:64px;top:477px;width:1047px;height:1px;background:rgba(176,176,176,0.55)"></div>
<div class="a" style="left:64px;top:497px;width:1047px;height:1px;background:rgba(176,176,176,0.55)"></div>
<div class="a" style="left:64px;top:517px;width:1047px;height:1px;background:rgba(176,176,176,0.55)"></div>
<div class="a" style="left:64px;top:537px;width:1047px;height:1px;background:rgba(176,176,176,0.55)"></div>
<div class="a" style="left:64px;top:557px;width:1047px;height:1px;background:rgba(176,176,176,0.55)"></div>
<div class="a" style="left:64px;top:577px;width:1047px;height:1px;background:rgba(176,176,176,0.55)"></div>
<div class="a" style="left:64px;top:597px;width:1047px;height:1px;background:rgba(176,176,176,0.55)"></div>
<div class="a" style="left:64px;top:617px;width:1047px;height:1px;background:rgba(176,176,176,0.55)"></div>
<div class="a" style="left:64px;top:637px;width:1047px;height:1px;background:rgba(176,176,176,0.55)"></div>
<div class="a" style="left:64px;top:657px;width:1047px;height:1px;background:rgba(176,176,176,0.55)"></div>
<div class="a" style="left:64px;top:677px;width:1047px;height:1px;background:rgba(176,176,176,0.55)"></div>
<div class="a" style="left:64px;top:697px;width:1047px;height:1px;background:rgba(176,176,176,0.55)"></div>
<div class="a" style="left:64px;top:717px;width:1047px;height:1px;background:rgba(176,176,176,0.55)"></div>
<div class="a" style="left:64px;top:737px;width:1047px;height:1px;background:rgba(176,176,176,0.55)"></div>
<div class="a" style="left:64px;top:757px;width:1047px;height:1px;background:rgba(176,176,176,0.55)"></div>
<div class="a" style="left:64px;top:777px;width:1047px;height:1px;background:rgba(176,176,176,0.55)"></div>
<div class="a" style="left:144px;top:197px;width:1px;height:601px;background:rgba(176,176,176,0.55)"></div>
<div class="a" style="left:197px;top:197px;width:1px;height:601px;background:rgba(176,176,176,0.55)"></div>
<div class="a" style="left:430px;top:197px;width:1px;height:601px;background:rgba(176,176,176,0.55)"></div>
<div class="a" style="left:490px;top:197px;width:1px;height:601px;background:rgba(176,176,176,0.55)"></div>
<div class="a" style="left:570px;top:197px;width:1px;height:601px;background:rgba(176,176,176,0.55)"></div>
<div class="a" style="left:650px;top:197px;width:1px;height:601px;background:rgba(176,176,176,0.55)"></div>
<div class="a" style="left:717px;top:197px;width:1px;height:601px;background:rgba(176,176,176,0.55)"></div>
<div class="a" style="left:784px;top:197px;width:1px;height:601px;background:rgba(176,176,176,0.55)"></div>
<div class="a" style="left:851px;top:197px;width:1px;height:601px;background:rgba(176,176,176,0.55)"></div>
<div class="a" style="left:918px;top:197px;width:1px;height:601px;background:rgba(176,176,176,0.55)"></div>
<div class="a" style="left:985px;top:197px;width:1px;height:601px;background:rgba(176,176,176,0.55)"></div>
<div class="a" style="left:1052px;top:197px;width:1px;height:601px;background:rgba(176,176,176,0.55)"></div>
<div class="a" style="left:63px;top:197px;width:1px;height:600px;background:#c4c4c4"></div>
<div class="a" style="left:1111px;top:161px;width:19px;height:655px;background:#efefef"></div>
<div class="a" style="left:48px;top:805px;width:460px;height:2px;background:#808080"></div>
<div class="a" style="left:1119px;top:178px;width:2px;height:529px;background:#808080"></div>
<div class="btn" style="left:360px;top:833px;width:84px;height:26px;line-height:24px">Exportieren</div>
<div class="btn" style="left:963px;top:833px;width:84px;height:26px;line-height:24px">Drucken</div>
<div class="btn" style="left:1046px;top:833px;width:84px;height:26px;line-height:24px">Schliessen</div>
</body></html>
